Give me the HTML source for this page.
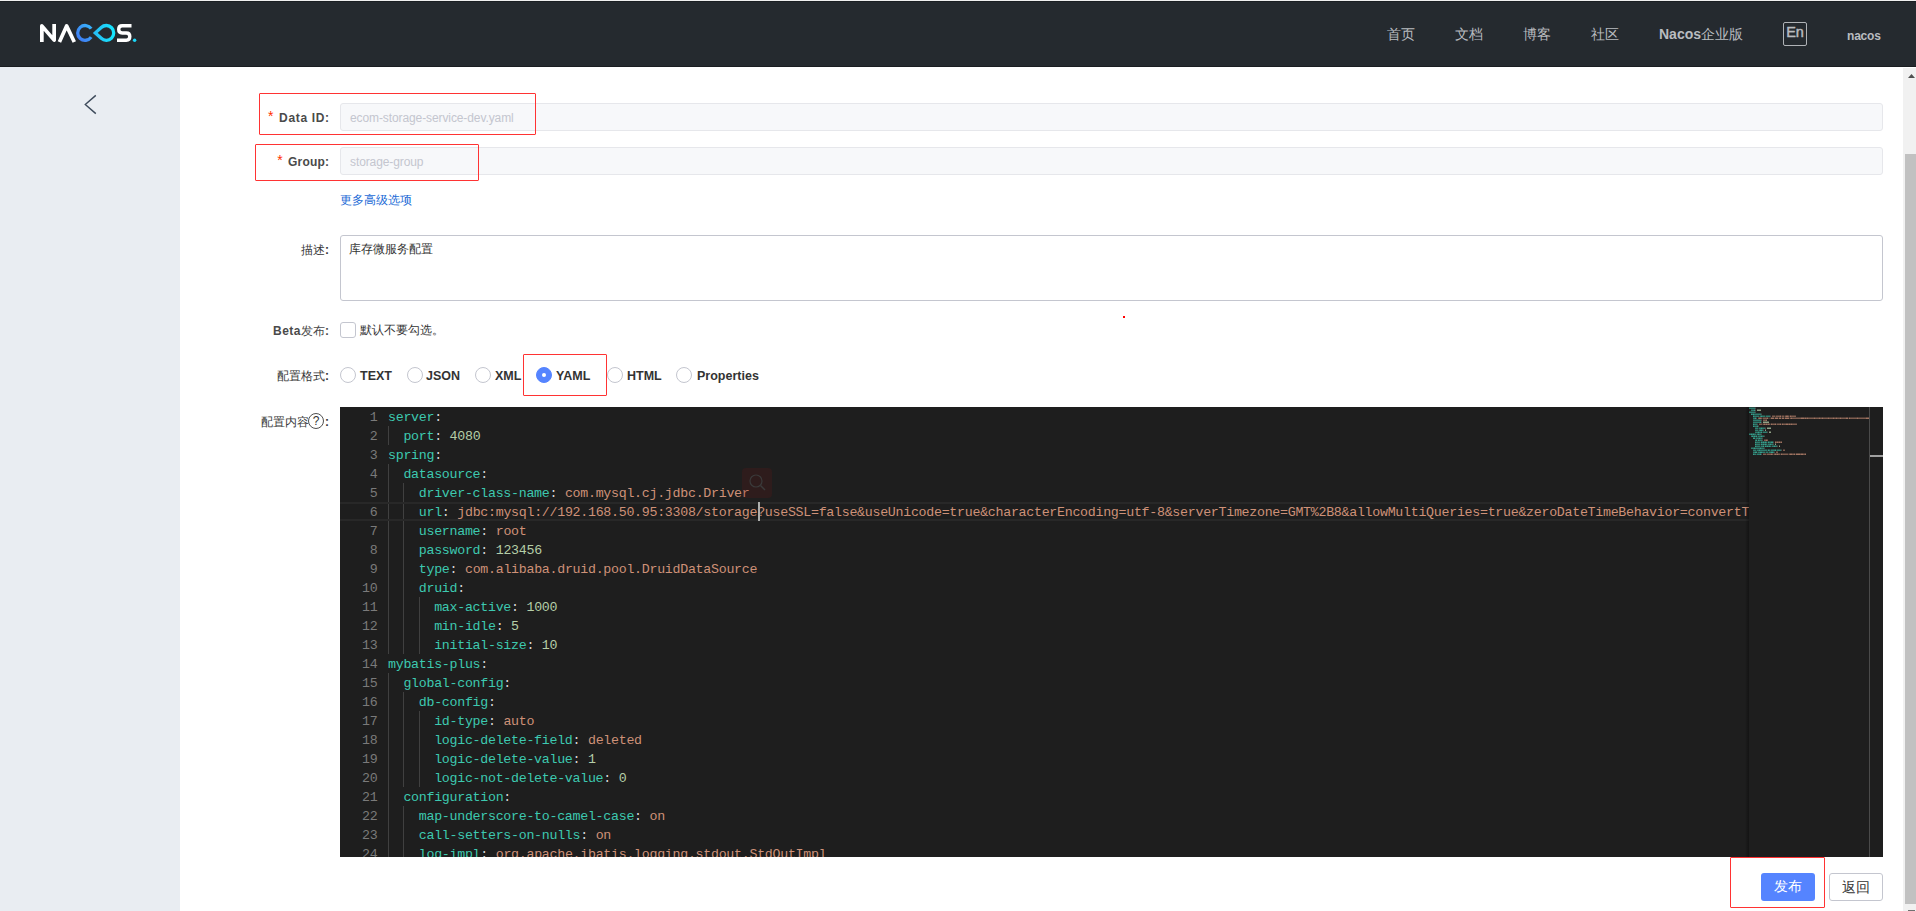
<!DOCTYPE html>
<html><head><meta charset="utf-8">
<style>
*{box-sizing:border-box}
html,body{margin:0;padding:0;width:1916px;height:911px;overflow:hidden;background:#fff;font-family:"Liberation Sans",sans-serif;}
.abs{position:absolute}
#topline{position:absolute;left:0;top:0;width:1916px;height:1px;background:#f0f0f0}
#hdr{position:absolute;left:0;top:1px;width:1916px;height:66px;background:#252a2f;border-top:1px solid #1b1f23;border-bottom:1px solid #1a1d21}
.nav{position:absolute;top:26px;font-size:14px;line-height:16px;color:#b9bcc0;white-space:nowrap;font-weight:500}
#side{position:absolute;left:0;top:67px;width:180px;height:844px;background:#e9edf2}
.lbl{position:absolute;right:1587px;font-size:12px;line-height:14px;color:#4a4a4a;font-weight:bold;white-space:nowrap;text-align:right}
.req{color:#ff3000;font-weight:normal;font-size:14px;margin-right:5px;line-height:0;position:relative;top:-1px}
.inp{position:absolute;left:340px;width:1543px;height:28px;background:#f7f8fa;border:1px solid #e6e7eb;border-radius:3px;font-size:12px;color:#c4c6cf;padding:7px 9px;line-height:14px;letter-spacing:-0.1px}
.redbox{position:absolute;border:1px solid #ff3333;border-radius:1px}
.radio{position:absolute;top:367px;width:16px;height:16px;border:1px solid #c4c6cf;border-radius:50%;background:#fff}
.rlab{position:absolute;top:369px;font-size:12.5px;line-height:14px;font-weight:bold;color:#333}
#editor{position:absolute;left:340px;top:407px;width:1543px;height:450px;background:#1e1e1e;overflow:hidden}
.ln{position:absolute;left:48px;height:19px;line-height:21px;font-family:"Liberation Mono",monospace;font-size:13.3px;letter-spacing:-0.29px;color:#d4d4d4;white-space:pre}
.lnum{position:absolute;left:0;width:37.5px;text-align:right;height:19px;line-height:21px;font-family:"Liberation Mono",monospace;font-size:13.3px;letter-spacing:-0.29px;color:#7a7a7a}
.guide{position:absolute;width:1px;height:19px;background:#404040}
.btn{position:absolute;top:873px;height:28px;width:54px;border-radius:3px;font-size:14px;line-height:27px;text-align:center}
</style></head><body>
<div id="topline"></div>
<div id="hdr"></div>
<svg class="abs" style="left:38px;top:22px" width="100" height="22" viewBox="0 0 100 22">
  <defs>
    <linearGradient id="gb" x1="0" y1="1" x2="1" y2="0"><stop offset="0" stop-color="#3f78f2"/><stop offset="1" stop-color="#38b4fc"/></linearGradient>
    <linearGradient id="gc" x1="0" y1="0" x2="1" y2="0"><stop offset="0" stop-color="#26bdf5"/><stop offset="1" stop-color="#16e6fe"/></linearGradient>
  </defs>
  <path d="M3.85 20V3.85L16.15 18.15V2" fill="none" stroke="#fff" stroke-width="3.7" stroke-linejoin="round"/>
  <path d="M21.4 20L28.6 3.9L36.3 20" fill="none" stroke="#fff" stroke-width="3.7" stroke-linejoin="round"/>
  <path d="M53.16 6.66A7.4 7.4 0 1 0 53.16 15.14" fill="none" stroke="url(#gb)" stroke-width="3.3"/>
  <path d="M57.3 10.9L63.25 5.49A7.4 7.4 0 1 1 63.25 16.31Z" fill="none" stroke="url(#gc)" stroke-width="3.3" stroke-linejoin="miter"/>
  <path d="M93.5 3.75H84.2Q80.7 3.75 80.7 7.3Q80.7 10.95 84.2 10.95H88.3Q91.8 10.95 91.8 14.6Q91.8 18.25 88.3 18.25H79" fill="none" stroke="#fff" stroke-width="3.4"/>
  <circle cx="96.6" cy="18.3" r="1.75" fill="#1bd6f8"/>
</svg>
<div class="nav" style="left:1387px">首页</div>
<div class="nav" style="left:1455px">文档</div>
<div class="nav" style="left:1523px">博客</div>
<div class="nav" style="left:1591px">社区</div>
<div class="nav" style="left:1659px"><b>Nacos</b>企业版</div>
<div class="abs" style="left:1783px;top:22px;width:24px;height:24px;border:1px solid #b0b3b7;border-radius:2px;color:#b9bcc0;font-size:14.5px;line-height:18px;text-align:center;font-weight:normal;-webkit-text-stroke:0.45px #b9bcc0">En</div>
<div class="nav" style="left:1847px;top:27.6px;font-size:12px;font-weight:bold;letter-spacing:-0.2px">nacos</div>

<div id="side"></div>
<svg class="abs" style="left:80px;top:92px" width="20" height="26"><path d="M15.8 3.4 L5.3 12.5 L15.8 21.6" fill="none" stroke="#3d4a5b" stroke-width="1.4"/></svg>

<div class="lbl" style="top:111px;letter-spacing:0.65px;margin-right:-0.65px"><span class="req">*</span>Data ID:</div>
<div class="inp" style="top:103px">ecom-storage-service-dev.yaml</div>
<div class="lbl" style="top:155px;letter-spacing:0.2px;margin-right:-0.2px"><span class="req">*</span>Group:</div>
<div class="inp" style="top:147px">storage-group</div>
<div class="abs" style="left:340px;top:193px;font-size:12px;line-height:14px;color:#1a6ad6;font-weight:500">更多高级选项</div>

<div class="lbl" style="top:243px;font-weight:500;color:#383838">描述<b>:</b></div>
<div class="abs" style="left:340px;top:235px;width:1543px;height:66px;border:1px solid #c4c6cf;border-radius:3px;font-size:12px;color:#333;padding:5px 8px;line-height:16px">库存微服务配置</div>
<div class="abs" style="left:1123px;top:316px;width:2px;height:2px;background:#ff0000"></div>

<div class="lbl" style="top:324px"><span style="letter-spacing:0.5px">Beta</span><span style="font-weight:500">发布</span>:</div>
<div class="abs" style="left:340px;top:322px;width:16px;height:16px;border:1px solid #c4c6cf;border-radius:3px;background:#fff"></div>
<div class="abs" style="left:360px;top:323px;font-size:12px;line-height:14px;color:#333;font-weight:500">默认不要勾选。</div>

<div class="lbl" style="top:369px;font-weight:500;color:#383838">配置格式<b>:</b></div>
<div class="radio" style="left:340px"></div><div class="rlab" style="left:360px">TEXT</div>
<div class="radio" style="left:407px"></div><div class="rlab" style="left:426px">JSON</div>
<div class="radio" style="left:475px"></div><div class="rlab" style="left:495px">XML</div>
<div class="radio" style="left:536px;background:#5584ff;border-color:#5584ff"><div style="position:absolute;left:5px;top:5px;width:4px;height:4px;border-radius:50%;background:#fff"></div></div><div class="rlab" style="left:556px">YAML</div>
<div class="radio" style="left:607px"></div><div class="rlab" style="left:627px">HTML</div>
<div class="radio" style="left:676px"></div><div class="rlab" style="left:697px">Properties</div>

<div class="lbl" style="top:415px;font-weight:500;color:#383838">配置内容<span style="display:inline-block;width:16px"></span><b>:</b></div>
<div class="abs" style="left:308px;top:413px;width:16px;height:16px;border:1.4px solid #505050;border-radius:50%;font-size:12px;line-height:14.5px;text-align:center;color:#333;font-family:'Liberation Sans',sans-serif">?</div>

<div id="editor">
<div class="guide" style="top:19px;left:48.00px"></div>
<div class="guide" style="top:57px;left:48.00px"></div>
<div class="guide" style="top:76px;left:48.00px"></div>
<div class="guide" style="top:76px;left:63.38px"></div>
<div class="guide" style="top:95px;left:48.00px"></div>
<div class="guide" style="top:95px;left:63.38px"></div>
<div class="guide" style="top:114px;left:48.00px"></div>
<div class="guide" style="top:114px;left:63.38px"></div>
<div class="guide" style="top:133px;left:48.00px"></div>
<div class="guide" style="top:133px;left:63.38px"></div>
<div class="guide" style="top:152px;left:48.00px"></div>
<div class="guide" style="top:152px;left:63.38px"></div>
<div class="guide" style="top:171px;left:48.00px"></div>
<div class="guide" style="top:171px;left:63.38px"></div>
<div class="guide" style="top:190px;left:48.00px"></div>
<div class="guide" style="top:190px;left:63.38px"></div>
<div class="guide" style="top:190px;left:78.76px"></div>
<div class="guide" style="top:209px;left:48.00px"></div>
<div class="guide" style="top:209px;left:63.38px"></div>
<div class="guide" style="top:209px;left:78.76px"></div>
<div class="guide" style="top:228px;left:48.00px"></div>
<div class="guide" style="top:228px;left:63.38px"></div>
<div class="guide" style="top:228px;left:78.76px"></div>
<div class="guide" style="top:266px;left:48.00px"></div>
<div class="guide" style="top:285px;left:48.00px"></div>
<div class="guide" style="top:285px;left:63.38px"></div>
<div class="guide" style="top:304px;left:48.00px"></div>
<div class="guide" style="top:304px;left:63.38px"></div>
<div class="guide" style="top:304px;left:78.76px"></div>
<div class="guide" style="top:323px;left:48.00px"></div>
<div class="guide" style="top:323px;left:63.38px"></div>
<div class="guide" style="top:323px;left:78.76px"></div>
<div class="guide" style="top:342px;left:48.00px"></div>
<div class="guide" style="top:342px;left:63.38px"></div>
<div class="guide" style="top:342px;left:78.76px"></div>
<div class="guide" style="top:361px;left:48.00px"></div>
<div class="guide" style="top:361px;left:63.38px"></div>
<div class="guide" style="top:361px;left:78.76px"></div>
<div class="guide" style="top:380px;left:48.00px"></div>
<div class="guide" style="top:399px;left:48.00px"></div>
<div class="guide" style="top:399px;left:63.38px"></div>
<div class="guide" style="top:418px;left:48.00px"></div>
<div class="guide" style="top:418px;left:63.38px"></div>
<div class="guide" style="top:437px;left:48.00px"></div>
<div class="guide" style="top:437px;left:63.38px"></div>
<div class="ln" style="top:0px"><span style="color:#3dc9b0">server</span><span style="color:#d4d4d4">:</span></div>
<div class="lnum" style="top:0px">1</div>
<div class="ln" style="top:19px">  <span style="color:#3dc9b0">port</span><span style="color:#d4d4d4">:</span> <span style="color:#b5cea8">4080</span></div>
<div class="lnum" style="top:19px">2</div>
<div class="ln" style="top:38px"><span style="color:#3dc9b0">spring</span><span style="color:#d4d4d4">:</span></div>
<div class="lnum" style="top:38px">3</div>
<div class="ln" style="top:57px">  <span style="color:#3dc9b0">datasource</span><span style="color:#d4d4d4">:</span></div>
<div class="lnum" style="top:57px">4</div>
<div class="ln" style="top:76px">    <span style="color:#3dc9b0">driver-class-name</span><span style="color:#d4d4d4">:</span> <span style="color:#ce9178">com.mysql.cj.jdbc.Driver</span></div>
<div class="lnum" style="top:76px">5</div>
<div class="ln" style="top:95px">    <span style="color:#3dc9b0">url</span><span style="color:#d4d4d4">:</span> <span style="color:#ce9178">jdbc:mysql://192.168.50.95:3308/storage?useSSL=false&amp;useUnicode=true&amp;characterEncoding=utf-8&amp;serverTimezone=GMT%2B8&amp;allowMultiQueries=true&amp;zeroDateTimeBehavior=convertToNull</span></div>
<div class="lnum" style="top:95px">6</div>
<div class="ln" style="top:114px">    <span style="color:#3dc9b0">username</span><span style="color:#d4d4d4">:</span> <span style="color:#ce9178">root</span></div>
<div class="lnum" style="top:114px">7</div>
<div class="ln" style="top:133px">    <span style="color:#3dc9b0">password</span><span style="color:#d4d4d4">:</span> <span style="color:#b5cea8">123456</span></div>
<div class="lnum" style="top:133px">8</div>
<div class="ln" style="top:152px">    <span style="color:#3dc9b0">type</span><span style="color:#d4d4d4">:</span> <span style="color:#ce9178">com.alibaba.druid.pool.DruidDataSource</span></div>
<div class="lnum" style="top:152px">9</div>
<div class="ln" style="top:171px">    <span style="color:#3dc9b0">druid</span><span style="color:#d4d4d4">:</span></div>
<div class="lnum" style="top:171px">10</div>
<div class="ln" style="top:190px">      <span style="color:#3dc9b0">max-active</span><span style="color:#d4d4d4">:</span> <span style="color:#b5cea8">1000</span></div>
<div class="lnum" style="top:190px">11</div>
<div class="ln" style="top:209px">      <span style="color:#3dc9b0">min-idle</span><span style="color:#d4d4d4">:</span> <span style="color:#b5cea8">5</span></div>
<div class="lnum" style="top:209px">12</div>
<div class="ln" style="top:228px">      <span style="color:#3dc9b0">initial-size</span><span style="color:#d4d4d4">:</span> <span style="color:#b5cea8">10</span></div>
<div class="lnum" style="top:228px">13</div>
<div class="ln" style="top:247px"><span style="color:#3dc9b0">mybatis-plus</span><span style="color:#d4d4d4">:</span></div>
<div class="lnum" style="top:247px">14</div>
<div class="ln" style="top:266px">  <span style="color:#3dc9b0">global-config</span><span style="color:#d4d4d4">:</span></div>
<div class="lnum" style="top:266px">15</div>
<div class="ln" style="top:285px">    <span style="color:#3dc9b0">db-config</span><span style="color:#d4d4d4">:</span></div>
<div class="lnum" style="top:285px">16</div>
<div class="ln" style="top:304px">      <span style="color:#3dc9b0">id-type</span><span style="color:#d4d4d4">:</span> <span style="color:#ce9178">auto</span></div>
<div class="lnum" style="top:304px">17</div>
<div class="ln" style="top:323px">      <span style="color:#3dc9b0">logic-delete-field</span><span style="color:#d4d4d4">:</span> <span style="color:#ce9178">deleted</span></div>
<div class="lnum" style="top:323px">18</div>
<div class="ln" style="top:342px">      <span style="color:#3dc9b0">logic-delete-value</span><span style="color:#d4d4d4">:</span> <span style="color:#b5cea8">1</span></div>
<div class="lnum" style="top:342px">19</div>
<div class="ln" style="top:361px">      <span style="color:#3dc9b0">logic-not-delete-value</span><span style="color:#d4d4d4">:</span> <span style="color:#b5cea8">0</span></div>
<div class="lnum" style="top:361px">20</div>
<div class="ln" style="top:380px">  <span style="color:#3dc9b0">configuration</span><span style="color:#d4d4d4">:</span></div>
<div class="lnum" style="top:380px">21</div>
<div class="ln" style="top:399px">    <span style="color:#3dc9b0">map-underscore-to-camel-case</span><span style="color:#d4d4d4">:</span> <span style="color:#ce9178">on</span></div>
<div class="lnum" style="top:399px">22</div>
<div class="ln" style="top:418px">    <span style="color:#3dc9b0">call-setters-on-nulls</span><span style="color:#d4d4d4">:</span> <span style="color:#ce9178">on</span></div>
<div class="lnum" style="top:418px">23</div>
<div class="ln" style="top:437px">    <span style="color:#3dc9b0">log-impl</span><span style="color:#d4d4d4">:</span> <span style="color:#ce9178">org.apache.ibatis.logging.stdout.StdOutImpl</span></div>
<div class="lnum" style="top:437px">24</div>
<div class="abs" style="left:0;top:95px;width:1409px;height:19px;border-top:2px solid #282828;border-bottom:2px solid #282828"></div>
<div class="abs" style="left:418px;top:95px;width:2px;height:19px;background:#aeafad"></div>
<div class="abs" style="left:402px;top:61px;width:30px;height:30px;background:rgba(110,20,20,0.2);border-radius:4px"></div>
<svg class="abs" style="left:402px;top:61px" width="30" height="30"><circle cx="14" cy="13" r="6" fill="none" stroke="#3a3a3a" stroke-width="1.2"/><path d="M18.5 17.5 L23 22" stroke="#3a3a3a" stroke-width="1.5"/></svg>
<div class="abs" style="left:1405px;top:0;width:4px;height:450px;background:linear-gradient(to right,rgba(0,0,0,0),rgba(0,0,0,0.35))"></div>
<div class="abs" style="left:1409px;top:0;width:120px;height:450px;background:#1e1e1e"></div>
<svg class="abs" style="left:1409px;top:0" width="120" height="60"><rect x="0" y="0" width="1" height="1" fill="#3dc9b0" fill-opacity="0.28"/><rect x="0" y="1" width="1" height="1" fill="#3dc9b0" fill-opacity="0.55"/><rect x="1" y="0" width="1" height="1" fill="#3dc9b0" fill-opacity="0.28"/><rect x="1" y="1" width="1" height="1" fill="#3dc9b0" fill-opacity="0.55"/><rect x="2" y="0" width="1" height="1" fill="#3dc9b0" fill-opacity="0.28"/><rect x="2" y="1" width="1" height="1" fill="#3dc9b0" fill-opacity="0.55"/><rect x="3" y="0" width="1" height="1" fill="#3dc9b0" fill-opacity="0.28"/><rect x="3" y="1" width="1" height="1" fill="#3dc9b0" fill-opacity="0.55"/><rect x="4" y="0" width="1" height="1" fill="#3dc9b0" fill-opacity="0.28"/><rect x="4" y="1" width="1" height="1" fill="#3dc9b0" fill-opacity="0.55"/><rect x="5" y="0" width="1" height="1" fill="#3dc9b0" fill-opacity="0.28"/><rect x="5" y="1" width="1" height="1" fill="#3dc9b0" fill-opacity="0.55"/><rect x="6" y="0" width="1" height="1" fill="#d4d4d4" fill-opacity="0.12"/><rect x="6" y="1" width="1" height="1" fill="#d4d4d4" fill-opacity="0.25"/><rect x="2" y="2" width="1" height="1" fill="#3dc9b0" fill-opacity="0.28"/><rect x="2" y="3" width="1" height="1" fill="#3dc9b0" fill-opacity="0.55"/><rect x="3" y="2" width="1" height="1" fill="#3dc9b0" fill-opacity="0.28"/><rect x="3" y="3" width="1" height="1" fill="#3dc9b0" fill-opacity="0.55"/><rect x="4" y="2" width="1" height="1" fill="#3dc9b0" fill-opacity="0.28"/><rect x="4" y="3" width="1" height="1" fill="#3dc9b0" fill-opacity="0.55"/><rect x="5" y="2" width="1" height="1" fill="#3dc9b0" fill-opacity="0.38"/><rect x="5" y="3" width="1" height="1" fill="#3dc9b0" fill-opacity="0.75"/><rect x="6" y="2" width="1" height="1" fill="#d4d4d4" fill-opacity="0.12"/><rect x="6" y="3" width="1" height="1" fill="#d4d4d4" fill-opacity="0.25"/><rect x="8" y="2" width="1" height="1" fill="#b5cea8" fill-opacity="0.38"/><rect x="8" y="3" width="1" height="1" fill="#b5cea8" fill-opacity="0.75"/><rect x="9" y="2" width="1" height="1" fill="#b5cea8" fill-opacity="0.38"/><rect x="9" y="3" width="1" height="1" fill="#b5cea8" fill-opacity="0.75"/><rect x="10" y="2" width="1" height="1" fill="#b5cea8" fill-opacity="0.38"/><rect x="10" y="3" width="1" height="1" fill="#b5cea8" fill-opacity="0.75"/><rect x="11" y="2" width="1" height="1" fill="#b5cea8" fill-opacity="0.38"/><rect x="11" y="3" width="1" height="1" fill="#b5cea8" fill-opacity="0.75"/><rect x="0" y="4" width="1" height="1" fill="#3dc9b0" fill-opacity="0.28"/><rect x="0" y="5" width="1" height="1" fill="#3dc9b0" fill-opacity="0.55"/><rect x="1" y="4" width="1" height="1" fill="#3dc9b0" fill-opacity="0.28"/><rect x="1" y="5" width="1" height="1" fill="#3dc9b0" fill-opacity="0.55"/><rect x="2" y="4" width="1" height="1" fill="#3dc9b0" fill-opacity="0.28"/><rect x="2" y="5" width="1" height="1" fill="#3dc9b0" fill-opacity="0.55"/><rect x="3" y="4" width="1" height="1" fill="#3dc9b0" fill-opacity="0.28"/><rect x="3" y="5" width="1" height="1" fill="#3dc9b0" fill-opacity="0.55"/><rect x="4" y="4" width="1" height="1" fill="#3dc9b0" fill-opacity="0.28"/><rect x="4" y="5" width="1" height="1" fill="#3dc9b0" fill-opacity="0.55"/><rect x="5" y="4" width="1" height="1" fill="#3dc9b0" fill-opacity="0.28"/><rect x="5" y="5" width="1" height="1" fill="#3dc9b0" fill-opacity="0.55"/><rect x="6" y="4" width="1" height="1" fill="#d4d4d4" fill-opacity="0.12"/><rect x="6" y="5" width="1" height="1" fill="#d4d4d4" fill-opacity="0.25"/><rect x="2" y="6" width="1" height="1" fill="#3dc9b0" fill-opacity="0.38"/><rect x="2" y="7" width="1" height="1" fill="#3dc9b0" fill-opacity="0.75"/><rect x="3" y="6" width="1" height="1" fill="#3dc9b0" fill-opacity="0.28"/><rect x="3" y="7" width="1" height="1" fill="#3dc9b0" fill-opacity="0.55"/><rect x="4" y="6" width="1" height="1" fill="#3dc9b0" fill-opacity="0.38"/><rect x="4" y="7" width="1" height="1" fill="#3dc9b0" fill-opacity="0.75"/><rect x="5" y="6" width="1" height="1" fill="#3dc9b0" fill-opacity="0.28"/><rect x="5" y="7" width="1" height="1" fill="#3dc9b0" fill-opacity="0.55"/><rect x="6" y="6" width="1" height="1" fill="#3dc9b0" fill-opacity="0.28"/><rect x="6" y="7" width="1" height="1" fill="#3dc9b0" fill-opacity="0.55"/><rect x="7" y="6" width="1" height="1" fill="#3dc9b0" fill-opacity="0.28"/><rect x="7" y="7" width="1" height="1" fill="#3dc9b0" fill-opacity="0.55"/><rect x="8" y="6" width="1" height="1" fill="#3dc9b0" fill-opacity="0.28"/><rect x="8" y="7" width="1" height="1" fill="#3dc9b0" fill-opacity="0.55"/><rect x="9" y="6" width="1" height="1" fill="#3dc9b0" fill-opacity="0.28"/><rect x="9" y="7" width="1" height="1" fill="#3dc9b0" fill-opacity="0.55"/><rect x="10" y="6" width="1" height="1" fill="#3dc9b0" fill-opacity="0.28"/><rect x="10" y="7" width="1" height="1" fill="#3dc9b0" fill-opacity="0.55"/><rect x="11" y="6" width="1" height="1" fill="#3dc9b0" fill-opacity="0.28"/><rect x="11" y="7" width="1" height="1" fill="#3dc9b0" fill-opacity="0.55"/><rect x="12" y="6" width="1" height="1" fill="#d4d4d4" fill-opacity="0.12"/><rect x="12" y="7" width="1" height="1" fill="#d4d4d4" fill-opacity="0.25"/><rect x="4" y="8" width="1" height="1" fill="#3dc9b0" fill-opacity="0.38"/><rect x="4" y="9" width="1" height="1" fill="#3dc9b0" fill-opacity="0.75"/><rect x="5" y="8" width="1" height="1" fill="#3dc9b0" fill-opacity="0.28"/><rect x="5" y="9" width="1" height="1" fill="#3dc9b0" fill-opacity="0.55"/><rect x="6" y="8" width="1" height="1" fill="#3dc9b0" fill-opacity="0.28"/><rect x="6" y="9" width="1" height="1" fill="#3dc9b0" fill-opacity="0.55"/><rect x="7" y="8" width="1" height="1" fill="#3dc9b0" fill-opacity="0.28"/><rect x="7" y="9" width="1" height="1" fill="#3dc9b0" fill-opacity="0.55"/><rect x="8" y="8" width="1" height="1" fill="#3dc9b0" fill-opacity="0.28"/><rect x="8" y="9" width="1" height="1" fill="#3dc9b0" fill-opacity="0.55"/><rect x="9" y="8" width="1" height="1" fill="#3dc9b0" fill-opacity="0.28"/><rect x="9" y="9" width="1" height="1" fill="#3dc9b0" fill-opacity="0.55"/><rect x="10" y="8" width="1" height="1" fill="#3dc9b0" fill-opacity="0.12"/><rect x="10" y="9" width="1" height="1" fill="#3dc9b0" fill-opacity="0.25"/><rect x="11" y="8" width="1" height="1" fill="#3dc9b0" fill-opacity="0.28"/><rect x="11" y="9" width="1" height="1" fill="#3dc9b0" fill-opacity="0.55"/><rect x="12" y="8" width="1" height="1" fill="#3dc9b0" fill-opacity="0.38"/><rect x="12" y="9" width="1" height="1" fill="#3dc9b0" fill-opacity="0.75"/><rect x="13" y="8" width="1" height="1" fill="#3dc9b0" fill-opacity="0.28"/><rect x="13" y="9" width="1" height="1" fill="#3dc9b0" fill-opacity="0.55"/><rect x="14" y="8" width="1" height="1" fill="#3dc9b0" fill-opacity="0.28"/><rect x="14" y="9" width="1" height="1" fill="#3dc9b0" fill-opacity="0.55"/><rect x="15" y="8" width="1" height="1" fill="#3dc9b0" fill-opacity="0.28"/><rect x="15" y="9" width="1" height="1" fill="#3dc9b0" fill-opacity="0.55"/><rect x="16" y="8" width="1" height="1" fill="#3dc9b0" fill-opacity="0.12"/><rect x="16" y="9" width="1" height="1" fill="#3dc9b0" fill-opacity="0.25"/><rect x="17" y="8" width="1" height="1" fill="#3dc9b0" fill-opacity="0.28"/><rect x="17" y="9" width="1" height="1" fill="#3dc9b0" fill-opacity="0.55"/><rect x="18" y="8" width="1" height="1" fill="#3dc9b0" fill-opacity="0.28"/><rect x="18" y="9" width="1" height="1" fill="#3dc9b0" fill-opacity="0.55"/><rect x="19" y="8" width="1" height="1" fill="#3dc9b0" fill-opacity="0.28"/><rect x="19" y="9" width="1" height="1" fill="#3dc9b0" fill-opacity="0.55"/><rect x="20" y="8" width="1" height="1" fill="#3dc9b0" fill-opacity="0.28"/><rect x="20" y="9" width="1" height="1" fill="#3dc9b0" fill-opacity="0.55"/><rect x="21" y="8" width="1" height="1" fill="#d4d4d4" fill-opacity="0.12"/><rect x="21" y="9" width="1" height="1" fill="#d4d4d4" fill-opacity="0.25"/><rect x="23" y="8" width="1" height="1" fill="#ce9178" fill-opacity="0.28"/><rect x="23" y="9" width="1" height="1" fill="#ce9178" fill-opacity="0.55"/><rect x="24" y="8" width="1" height="1" fill="#ce9178" fill-opacity="0.28"/><rect x="24" y="9" width="1" height="1" fill="#ce9178" fill-opacity="0.55"/><rect x="25" y="8" width="1" height="1" fill="#ce9178" fill-opacity="0.28"/><rect x="25" y="9" width="1" height="1" fill="#ce9178" fill-opacity="0.55"/><rect x="26" y="8" width="1" height="1" fill="#ce9178" fill-opacity="0.12"/><rect x="26" y="9" width="1" height="1" fill="#ce9178" fill-opacity="0.25"/><rect x="27" y="8" width="1" height="1" fill="#ce9178" fill-opacity="0.28"/><rect x="27" y="9" width="1" height="1" fill="#ce9178" fill-opacity="0.55"/><rect x="28" y="8" width="1" height="1" fill="#ce9178" fill-opacity="0.28"/><rect x="28" y="9" width="1" height="1" fill="#ce9178" fill-opacity="0.55"/><rect x="29" y="8" width="1" height="1" fill="#ce9178" fill-opacity="0.28"/><rect x="29" y="9" width="1" height="1" fill="#ce9178" fill-opacity="0.55"/><rect x="30" y="8" width="1" height="1" fill="#ce9178" fill-opacity="0.28"/><rect x="30" y="9" width="1" height="1" fill="#ce9178" fill-opacity="0.55"/><rect x="31" y="8" width="1" height="1" fill="#ce9178" fill-opacity="0.38"/><rect x="31" y="9" width="1" height="1" fill="#ce9178" fill-opacity="0.75"/><rect x="32" y="8" width="1" height="1" fill="#ce9178" fill-opacity="0.12"/><rect x="32" y="9" width="1" height="1" fill="#ce9178" fill-opacity="0.25"/><rect x="33" y="8" width="1" height="1" fill="#ce9178" fill-opacity="0.28"/><rect x="33" y="9" width="1" height="1" fill="#ce9178" fill-opacity="0.55"/><rect x="34" y="8" width="1" height="1" fill="#ce9178" fill-opacity="0.28"/><rect x="34" y="9" width="1" height="1" fill="#ce9178" fill-opacity="0.55"/><rect x="35" y="8" width="1" height="1" fill="#ce9178" fill-opacity="0.12"/><rect x="35" y="9" width="1" height="1" fill="#ce9178" fill-opacity="0.25"/><rect x="36" y="8" width="1" height="1" fill="#ce9178" fill-opacity="0.28"/><rect x="36" y="9" width="1" height="1" fill="#ce9178" fill-opacity="0.55"/><rect x="37" y="8" width="1" height="1" fill="#ce9178" fill-opacity="0.38"/><rect x="37" y="9" width="1" height="1" fill="#ce9178" fill-opacity="0.75"/><rect x="38" y="8" width="1" height="1" fill="#ce9178" fill-opacity="0.38"/><rect x="38" y="9" width="1" height="1" fill="#ce9178" fill-opacity="0.75"/><rect x="39" y="8" width="1" height="1" fill="#ce9178" fill-opacity="0.28"/><rect x="39" y="9" width="1" height="1" fill="#ce9178" fill-opacity="0.55"/><rect x="40" y="8" width="1" height="1" fill="#ce9178" fill-opacity="0.12"/><rect x="40" y="9" width="1" height="1" fill="#ce9178" fill-opacity="0.25"/><rect x="41" y="8" width="1" height="1" fill="#ce9178" fill-opacity="0.38"/><rect x="41" y="9" width="1" height="1" fill="#ce9178" fill-opacity="0.75"/><rect x="42" y="8" width="1" height="1" fill="#ce9178" fill-opacity="0.28"/><rect x="42" y="9" width="1" height="1" fill="#ce9178" fill-opacity="0.55"/><rect x="43" y="8" width="1" height="1" fill="#ce9178" fill-opacity="0.28"/><rect x="43" y="9" width="1" height="1" fill="#ce9178" fill-opacity="0.55"/><rect x="44" y="8" width="1" height="1" fill="#ce9178" fill-opacity="0.28"/><rect x="44" y="9" width="1" height="1" fill="#ce9178" fill-opacity="0.55"/><rect x="45" y="8" width="1" height="1" fill="#ce9178" fill-opacity="0.28"/><rect x="45" y="9" width="1" height="1" fill="#ce9178" fill-opacity="0.55"/><rect x="46" y="8" width="1" height="1" fill="#ce9178" fill-opacity="0.28"/><rect x="46" y="9" width="1" height="1" fill="#ce9178" fill-opacity="0.55"/><rect x="4" y="10" width="1" height="1" fill="#3dc9b0" fill-opacity="0.28"/><rect x="4" y="11" width="1" height="1" fill="#3dc9b0" fill-opacity="0.55"/><rect x="5" y="10" width="1" height="1" fill="#3dc9b0" fill-opacity="0.28"/><rect x="5" y="11" width="1" height="1" fill="#3dc9b0" fill-opacity="0.55"/><rect x="6" y="10" width="1" height="1" fill="#3dc9b0" fill-opacity="0.38"/><rect x="6" y="11" width="1" height="1" fill="#3dc9b0" fill-opacity="0.75"/><rect x="7" y="10" width="1" height="1" fill="#d4d4d4" fill-opacity="0.12"/><rect x="7" y="11" width="1" height="1" fill="#d4d4d4" fill-opacity="0.25"/><rect x="9" y="10" width="1" height="1" fill="#ce9178" fill-opacity="0.28"/><rect x="9" y="11" width="1" height="1" fill="#ce9178" fill-opacity="0.55"/><rect x="10" y="10" width="1" height="1" fill="#ce9178" fill-opacity="0.38"/><rect x="10" y="11" width="1" height="1" fill="#ce9178" fill-opacity="0.75"/><rect x="11" y="10" width="1" height="1" fill="#ce9178" fill-opacity="0.38"/><rect x="11" y="11" width="1" height="1" fill="#ce9178" fill-opacity="0.75"/><rect x="12" y="10" width="1" height="1" fill="#ce9178" fill-opacity="0.28"/><rect x="12" y="11" width="1" height="1" fill="#ce9178" fill-opacity="0.55"/><rect x="13" y="10" width="1" height="1" fill="#ce9178" fill-opacity="0.12"/><rect x="13" y="11" width="1" height="1" fill="#ce9178" fill-opacity="0.25"/><rect x="14" y="10" width="1" height="1" fill="#ce9178" fill-opacity="0.28"/><rect x="14" y="11" width="1" height="1" fill="#ce9178" fill-opacity="0.55"/><rect x="15" y="10" width="1" height="1" fill="#ce9178" fill-opacity="0.28"/><rect x="15" y="11" width="1" height="1" fill="#ce9178" fill-opacity="0.55"/><rect x="16" y="10" width="1" height="1" fill="#ce9178" fill-opacity="0.28"/><rect x="16" y="11" width="1" height="1" fill="#ce9178" fill-opacity="0.55"/><rect x="17" y="10" width="1" height="1" fill="#ce9178" fill-opacity="0.28"/><rect x="17" y="11" width="1" height="1" fill="#ce9178" fill-opacity="0.55"/><rect x="18" y="10" width="1" height="1" fill="#ce9178" fill-opacity="0.38"/><rect x="18" y="11" width="1" height="1" fill="#ce9178" fill-opacity="0.75"/><rect x="19" y="10" width="1" height="1" fill="#ce9178" fill-opacity="0.12"/><rect x="19" y="11" width="1" height="1" fill="#ce9178" fill-opacity="0.25"/><rect x="20" y="10" width="1" height="1" fill="#ce9178" fill-opacity="0.12"/><rect x="20" y="11" width="1" height="1" fill="#ce9178" fill-opacity="0.25"/><rect x="21" y="10" width="1" height="1" fill="#ce9178" fill-opacity="0.12"/><rect x="21" y="11" width="1" height="1" fill="#ce9178" fill-opacity="0.25"/><rect x="22" y="10" width="1" height="1" fill="#ce9178" fill-opacity="0.38"/><rect x="22" y="11" width="1" height="1" fill="#ce9178" fill-opacity="0.75"/><rect x="23" y="10" width="1" height="1" fill="#ce9178" fill-opacity="0.38"/><rect x="23" y="11" width="1" height="1" fill="#ce9178" fill-opacity="0.75"/><rect x="24" y="10" width="1" height="1" fill="#ce9178" fill-opacity="0.38"/><rect x="24" y="11" width="1" height="1" fill="#ce9178" fill-opacity="0.75"/><rect x="25" y="10" width="1" height="1" fill="#ce9178" fill-opacity="0.12"/><rect x="25" y="11" width="1" height="1" fill="#ce9178" fill-opacity="0.25"/><rect x="26" y="10" width="1" height="1" fill="#ce9178" fill-opacity="0.38"/><rect x="26" y="11" width="1" height="1" fill="#ce9178" fill-opacity="0.75"/><rect x="27" y="10" width="1" height="1" fill="#ce9178" fill-opacity="0.38"/><rect x="27" y="11" width="1" height="1" fill="#ce9178" fill-opacity="0.75"/><rect x="28" y="10" width="1" height="1" fill="#ce9178" fill-opacity="0.38"/><rect x="28" y="11" width="1" height="1" fill="#ce9178" fill-opacity="0.75"/><rect x="29" y="10" width="1" height="1" fill="#ce9178" fill-opacity="0.12"/><rect x="29" y="11" width="1" height="1" fill="#ce9178" fill-opacity="0.25"/><rect x="30" y="10" width="1" height="1" fill="#ce9178" fill-opacity="0.38"/><rect x="30" y="11" width="1" height="1" fill="#ce9178" fill-opacity="0.75"/><rect x="31" y="10" width="1" height="1" fill="#ce9178" fill-opacity="0.38"/><rect x="31" y="11" width="1" height="1" fill="#ce9178" fill-opacity="0.75"/><rect x="32" y="10" width="1" height="1" fill="#ce9178" fill-opacity="0.12"/><rect x="32" y="11" width="1" height="1" fill="#ce9178" fill-opacity="0.25"/><rect x="33" y="10" width="1" height="1" fill="#ce9178" fill-opacity="0.38"/><rect x="33" y="11" width="1" height="1" fill="#ce9178" fill-opacity="0.75"/><rect x="34" y="10" width="1" height="1" fill="#ce9178" fill-opacity="0.38"/><rect x="34" y="11" width="1" height="1" fill="#ce9178" fill-opacity="0.75"/><rect x="35" y="10" width="1" height="1" fill="#ce9178" fill-opacity="0.12"/><rect x="35" y="11" width="1" height="1" fill="#ce9178" fill-opacity="0.25"/><rect x="36" y="10" width="1" height="1" fill="#ce9178" fill-opacity="0.38"/><rect x="36" y="11" width="1" height="1" fill="#ce9178" fill-opacity="0.75"/><rect x="37" y="10" width="1" height="1" fill="#ce9178" fill-opacity="0.38"/><rect x="37" y="11" width="1" height="1" fill="#ce9178" fill-opacity="0.75"/><rect x="38" y="10" width="1" height="1" fill="#ce9178" fill-opacity="0.38"/><rect x="38" y="11" width="1" height="1" fill="#ce9178" fill-opacity="0.75"/><rect x="39" y="10" width="1" height="1" fill="#ce9178" fill-opacity="0.38"/><rect x="39" y="11" width="1" height="1" fill="#ce9178" fill-opacity="0.75"/><rect x="40" y="10" width="1" height="1" fill="#ce9178" fill-opacity="0.12"/><rect x="40" y="11" width="1" height="1" fill="#ce9178" fill-opacity="0.25"/><rect x="41" y="10" width="1" height="1" fill="#ce9178" fill-opacity="0.28"/><rect x="41" y="11" width="1" height="1" fill="#ce9178" fill-opacity="0.55"/><rect x="42" y="10" width="1" height="1" fill="#ce9178" fill-opacity="0.38"/><rect x="42" y="11" width="1" height="1" fill="#ce9178" fill-opacity="0.75"/><rect x="43" y="10" width="1" height="1" fill="#ce9178" fill-opacity="0.28"/><rect x="43" y="11" width="1" height="1" fill="#ce9178" fill-opacity="0.55"/><rect x="44" y="10" width="1" height="1" fill="#ce9178" fill-opacity="0.28"/><rect x="44" y="11" width="1" height="1" fill="#ce9178" fill-opacity="0.55"/><rect x="45" y="10" width="1" height="1" fill="#ce9178" fill-opacity="0.28"/><rect x="45" y="11" width="1" height="1" fill="#ce9178" fill-opacity="0.55"/><rect x="46" y="10" width="1" height="1" fill="#ce9178" fill-opacity="0.28"/><rect x="46" y="11" width="1" height="1" fill="#ce9178" fill-opacity="0.55"/><rect x="47" y="10" width="1" height="1" fill="#ce9178" fill-opacity="0.28"/><rect x="47" y="11" width="1" height="1" fill="#ce9178" fill-opacity="0.55"/><rect x="48" y="10" width="1" height="1" fill="#ce9178" fill-opacity="0.28"/><rect x="48" y="11" width="1" height="1" fill="#ce9178" fill-opacity="0.55"/><rect x="49" y="10" width="1" height="1" fill="#ce9178" fill-opacity="0.28"/><rect x="49" y="11" width="1" height="1" fill="#ce9178" fill-opacity="0.55"/><rect x="50" y="10" width="1" height="1" fill="#ce9178" fill-opacity="0.28"/><rect x="50" y="11" width="1" height="1" fill="#ce9178" fill-opacity="0.55"/><rect x="51" y="10" width="1" height="1" fill="#ce9178" fill-opacity="0.28"/><rect x="51" y="11" width="1" height="1" fill="#ce9178" fill-opacity="0.55"/><rect x="52" y="10" width="1" height="1" fill="#ce9178" fill-opacity="0.38"/><rect x="52" y="11" width="1" height="1" fill="#ce9178" fill-opacity="0.75"/><rect x="53" y="10" width="1" height="1" fill="#ce9178" fill-opacity="0.38"/><rect x="53" y="11" width="1" height="1" fill="#ce9178" fill-opacity="0.75"/><rect x="54" y="10" width="1" height="1" fill="#ce9178" fill-opacity="0.38"/><rect x="54" y="11" width="1" height="1" fill="#ce9178" fill-opacity="0.75"/><rect x="55" y="10" width="1" height="1" fill="#ce9178" fill-opacity="0.28"/><rect x="55" y="11" width="1" height="1" fill="#ce9178" fill-opacity="0.55"/><rect x="56" y="10" width="1" height="1" fill="#ce9178" fill-opacity="0.38"/><rect x="56" y="11" width="1" height="1" fill="#ce9178" fill-opacity="0.75"/><rect x="57" y="10" width="1" height="1" fill="#ce9178" fill-opacity="0.28"/><rect x="57" y="11" width="1" height="1" fill="#ce9178" fill-opacity="0.55"/><rect x="58" y="10" width="1" height="1" fill="#ce9178" fill-opacity="0.38"/><rect x="58" y="11" width="1" height="1" fill="#ce9178" fill-opacity="0.75"/><rect x="59" y="10" width="1" height="1" fill="#ce9178" fill-opacity="0.28"/><rect x="59" y="11" width="1" height="1" fill="#ce9178" fill-opacity="0.55"/><rect x="60" y="10" width="1" height="1" fill="#ce9178" fill-opacity="0.28"/><rect x="60" y="11" width="1" height="1" fill="#ce9178" fill-opacity="0.55"/><rect x="61" y="10" width="1" height="1" fill="#ce9178" fill-opacity="0.28"/><rect x="61" y="11" width="1" height="1" fill="#ce9178" fill-opacity="0.55"/><rect x="62" y="10" width="1" height="1" fill="#ce9178" fill-opacity="0.28"/><rect x="62" y="11" width="1" height="1" fill="#ce9178" fill-opacity="0.55"/><rect x="63" y="10" width="1" height="1" fill="#ce9178" fill-opacity="0.28"/><rect x="63" y="11" width="1" height="1" fill="#ce9178" fill-opacity="0.55"/><rect x="64" y="10" width="1" height="1" fill="#ce9178" fill-opacity="0.28"/><rect x="64" y="11" width="1" height="1" fill="#ce9178" fill-opacity="0.55"/><rect x="65" y="10" width="1" height="1" fill="#ce9178" fill-opacity="0.38"/><rect x="65" y="11" width="1" height="1" fill="#ce9178" fill-opacity="0.75"/><rect x="66" y="10" width="1" height="1" fill="#ce9178" fill-opacity="0.28"/><rect x="66" y="11" width="1" height="1" fill="#ce9178" fill-opacity="0.55"/><rect x="67" y="10" width="1" height="1" fill="#ce9178" fill-opacity="0.28"/><rect x="67" y="11" width="1" height="1" fill="#ce9178" fill-opacity="0.55"/><rect x="68" y="10" width="1" height="1" fill="#ce9178" fill-opacity="0.28"/><rect x="68" y="11" width="1" height="1" fill="#ce9178" fill-opacity="0.55"/><rect x="69" y="10" width="1" height="1" fill="#ce9178" fill-opacity="0.28"/><rect x="69" y="11" width="1" height="1" fill="#ce9178" fill-opacity="0.55"/><rect x="70" y="10" width="1" height="1" fill="#ce9178" fill-opacity="0.38"/><rect x="70" y="11" width="1" height="1" fill="#ce9178" fill-opacity="0.75"/><rect x="71" y="10" width="1" height="1" fill="#ce9178" fill-opacity="0.28"/><rect x="71" y="11" width="1" height="1" fill="#ce9178" fill-opacity="0.55"/><rect x="72" y="10" width="1" height="1" fill="#ce9178" fill-opacity="0.28"/><rect x="72" y="11" width="1" height="1" fill="#ce9178" fill-opacity="0.55"/><rect x="73" y="10" width="1" height="1" fill="#ce9178" fill-opacity="0.38"/><rect x="73" y="11" width="1" height="1" fill="#ce9178" fill-opacity="0.75"/><rect x="74" y="10" width="1" height="1" fill="#ce9178" fill-opacity="0.28"/><rect x="74" y="11" width="1" height="1" fill="#ce9178" fill-opacity="0.55"/><rect x="75" y="10" width="1" height="1" fill="#ce9178" fill-opacity="0.28"/><rect x="75" y="11" width="1" height="1" fill="#ce9178" fill-opacity="0.55"/><rect x="76" y="10" width="1" height="1" fill="#ce9178" fill-opacity="0.28"/><rect x="76" y="11" width="1" height="1" fill="#ce9178" fill-opacity="0.55"/><rect x="77" y="10" width="1" height="1" fill="#ce9178" fill-opacity="0.28"/><rect x="77" y="11" width="1" height="1" fill="#ce9178" fill-opacity="0.55"/><rect x="78" y="10" width="1" height="1" fill="#ce9178" fill-opacity="0.28"/><rect x="78" y="11" width="1" height="1" fill="#ce9178" fill-opacity="0.55"/><rect x="79" y="10" width="1" height="1" fill="#ce9178" fill-opacity="0.38"/><rect x="79" y="11" width="1" height="1" fill="#ce9178" fill-opacity="0.75"/><rect x="80" y="10" width="1" height="1" fill="#ce9178" fill-opacity="0.28"/><rect x="80" y="11" width="1" height="1" fill="#ce9178" fill-opacity="0.55"/><rect x="81" y="10" width="1" height="1" fill="#ce9178" fill-opacity="0.28"/><rect x="81" y="11" width="1" height="1" fill="#ce9178" fill-opacity="0.55"/><rect x="82" y="10" width="1" height="1" fill="#ce9178" fill-opacity="0.28"/><rect x="82" y="11" width="1" height="1" fill="#ce9178" fill-opacity="0.55"/><rect x="83" y="10" width="1" height="1" fill="#ce9178" fill-opacity="0.28"/><rect x="83" y="11" width="1" height="1" fill="#ce9178" fill-opacity="0.55"/><rect x="84" y="10" width="1" height="1" fill="#ce9178" fill-opacity="0.38"/><rect x="84" y="11" width="1" height="1" fill="#ce9178" fill-opacity="0.75"/><rect x="85" y="10" width="1" height="1" fill="#ce9178" fill-opacity="0.28"/><rect x="85" y="11" width="1" height="1" fill="#ce9178" fill-opacity="0.55"/><rect x="86" y="10" width="1" height="1" fill="#ce9178" fill-opacity="0.28"/><rect x="86" y="11" width="1" height="1" fill="#ce9178" fill-opacity="0.55"/><rect x="87" y="10" width="1" height="1" fill="#ce9178" fill-opacity="0.38"/><rect x="87" y="11" width="1" height="1" fill="#ce9178" fill-opacity="0.75"/><rect x="88" y="10" width="1" height="1" fill="#ce9178" fill-opacity="0.28"/><rect x="88" y="11" width="1" height="1" fill="#ce9178" fill-opacity="0.55"/><rect x="89" y="10" width="1" height="1" fill="#ce9178" fill-opacity="0.28"/><rect x="89" y="11" width="1" height="1" fill="#ce9178" fill-opacity="0.55"/><rect x="90" y="10" width="1" height="1" fill="#ce9178" fill-opacity="0.28"/><rect x="90" y="11" width="1" height="1" fill="#ce9178" fill-opacity="0.55"/><rect x="91" y="10" width="1" height="1" fill="#ce9178" fill-opacity="0.38"/><rect x="91" y="11" width="1" height="1" fill="#ce9178" fill-opacity="0.75"/><rect x="92" y="10" width="1" height="1" fill="#ce9178" fill-opacity="0.28"/><rect x="92" y="11" width="1" height="1" fill="#ce9178" fill-opacity="0.55"/><rect x="93" y="10" width="1" height="1" fill="#ce9178" fill-opacity="0.28"/><rect x="93" y="11" width="1" height="1" fill="#ce9178" fill-opacity="0.55"/><rect x="94" y="10" width="1" height="1" fill="#ce9178" fill-opacity="0.28"/><rect x="94" y="11" width="1" height="1" fill="#ce9178" fill-opacity="0.55"/><rect x="95" y="10" width="1" height="1" fill="#ce9178" fill-opacity="0.28"/><rect x="95" y="11" width="1" height="1" fill="#ce9178" fill-opacity="0.55"/><rect x="96" y="10" width="1" height="1" fill="#ce9178" fill-opacity="0.28"/><rect x="96" y="11" width="1" height="1" fill="#ce9178" fill-opacity="0.55"/><rect x="97" y="10" width="1" height="1" fill="#ce9178" fill-opacity="0.38"/><rect x="97" y="11" width="1" height="1" fill="#ce9178" fill-opacity="0.75"/><rect x="98" y="10" width="1" height="1" fill="#ce9178" fill-opacity="0.38"/><rect x="98" y="11" width="1" height="1" fill="#ce9178" fill-opacity="0.75"/><rect x="99" y="10" width="1" height="1" fill="#ce9178" fill-opacity="0.12"/><rect x="99" y="11" width="1" height="1" fill="#ce9178" fill-opacity="0.25"/><rect x="100" y="10" width="1" height="1" fill="#ce9178" fill-opacity="0.38"/><rect x="100" y="11" width="1" height="1" fill="#ce9178" fill-opacity="0.75"/><rect x="101" y="10" width="1" height="1" fill="#ce9178" fill-opacity="0.28"/><rect x="101" y="11" width="1" height="1" fill="#ce9178" fill-opacity="0.55"/><rect x="102" y="10" width="1" height="1" fill="#ce9178" fill-opacity="0.28"/><rect x="102" y="11" width="1" height="1" fill="#ce9178" fill-opacity="0.55"/><rect x="103" y="10" width="1" height="1" fill="#ce9178" fill-opacity="0.28"/><rect x="103" y="11" width="1" height="1" fill="#ce9178" fill-opacity="0.55"/><rect x="104" y="10" width="1" height="1" fill="#ce9178" fill-opacity="0.28"/><rect x="104" y="11" width="1" height="1" fill="#ce9178" fill-opacity="0.55"/><rect x="105" y="10" width="1" height="1" fill="#ce9178" fill-opacity="0.28"/><rect x="105" y="11" width="1" height="1" fill="#ce9178" fill-opacity="0.55"/><rect x="106" y="10" width="1" height="1" fill="#ce9178" fill-opacity="0.28"/><rect x="106" y="11" width="1" height="1" fill="#ce9178" fill-opacity="0.55"/><rect x="107" y="10" width="1" height="1" fill="#ce9178" fill-opacity="0.28"/><rect x="107" y="11" width="1" height="1" fill="#ce9178" fill-opacity="0.55"/><rect x="108" y="10" width="1" height="1" fill="#ce9178" fill-opacity="0.38"/><rect x="108" y="11" width="1" height="1" fill="#ce9178" fill-opacity="0.75"/><rect x="109" y="10" width="1" height="1" fill="#ce9178" fill-opacity="0.28"/><rect x="109" y="11" width="1" height="1" fill="#ce9178" fill-opacity="0.55"/><rect x="110" y="10" width="1" height="1" fill="#ce9178" fill-opacity="0.28"/><rect x="110" y="11" width="1" height="1" fill="#ce9178" fill-opacity="0.55"/><rect x="111" y="10" width="1" height="1" fill="#ce9178" fill-opacity="0.28"/><rect x="111" y="11" width="1" height="1" fill="#ce9178" fill-opacity="0.55"/><rect x="112" y="10" width="1" height="1" fill="#ce9178" fill-opacity="0.28"/><rect x="112" y="11" width="1" height="1" fill="#ce9178" fill-opacity="0.55"/><rect x="113" y="10" width="1" height="1" fill="#ce9178" fill-opacity="0.28"/><rect x="113" y="11" width="1" height="1" fill="#ce9178" fill-opacity="0.55"/><rect x="114" y="10" width="1" height="1" fill="#ce9178" fill-opacity="0.28"/><rect x="114" y="11" width="1" height="1" fill="#ce9178" fill-opacity="0.55"/><rect x="115" y="10" width="1" height="1" fill="#ce9178" fill-opacity="0.28"/><rect x="115" y="11" width="1" height="1" fill="#ce9178" fill-opacity="0.55"/><rect x="116" y="10" width="1" height="1" fill="#ce9178" fill-opacity="0.28"/><rect x="116" y="11" width="1" height="1" fill="#ce9178" fill-opacity="0.55"/><rect x="117" y="10" width="1" height="1" fill="#ce9178" fill-opacity="0.38"/><rect x="117" y="11" width="1" height="1" fill="#ce9178" fill-opacity="0.75"/><rect x="118" y="10" width="1" height="1" fill="#ce9178" fill-opacity="0.38"/><rect x="118" y="11" width="1" height="1" fill="#ce9178" fill-opacity="0.75"/><rect x="119" y="10" width="1" height="1" fill="#ce9178" fill-opacity="0.38"/><rect x="119" y="11" width="1" height="1" fill="#ce9178" fill-opacity="0.75"/><rect x="4" y="12" width="1" height="1" fill="#3dc9b0" fill-opacity="0.28"/><rect x="4" y="13" width="1" height="1" fill="#3dc9b0" fill-opacity="0.55"/><rect x="5" y="12" width="1" height="1" fill="#3dc9b0" fill-opacity="0.28"/><rect x="5" y="13" width="1" height="1" fill="#3dc9b0" fill-opacity="0.55"/><rect x="6" y="12" width="1" height="1" fill="#3dc9b0" fill-opacity="0.28"/><rect x="6" y="13" width="1" height="1" fill="#3dc9b0" fill-opacity="0.55"/><rect x="7" y="12" width="1" height="1" fill="#3dc9b0" fill-opacity="0.28"/><rect x="7" y="13" width="1" height="1" fill="#3dc9b0" fill-opacity="0.55"/><rect x="8" y="12" width="1" height="1" fill="#3dc9b0" fill-opacity="0.28"/><rect x="8" y="13" width="1" height="1" fill="#3dc9b0" fill-opacity="0.55"/><rect x="9" y="12" width="1" height="1" fill="#3dc9b0" fill-opacity="0.28"/><rect x="9" y="13" width="1" height="1" fill="#3dc9b0" fill-opacity="0.55"/><rect x="10" y="12" width="1" height="1" fill="#3dc9b0" fill-opacity="0.28"/><rect x="10" y="13" width="1" height="1" fill="#3dc9b0" fill-opacity="0.55"/><rect x="11" y="12" width="1" height="1" fill="#3dc9b0" fill-opacity="0.28"/><rect x="11" y="13" width="1" height="1" fill="#3dc9b0" fill-opacity="0.55"/><rect x="12" y="12" width="1" height="1" fill="#d4d4d4" fill-opacity="0.12"/><rect x="12" y="13" width="1" height="1" fill="#d4d4d4" fill-opacity="0.25"/><rect x="14" y="12" width="1" height="1" fill="#ce9178" fill-opacity="0.28"/><rect x="14" y="13" width="1" height="1" fill="#ce9178" fill-opacity="0.55"/><rect x="15" y="12" width="1" height="1" fill="#ce9178" fill-opacity="0.28"/><rect x="15" y="13" width="1" height="1" fill="#ce9178" fill-opacity="0.55"/><rect x="16" y="12" width="1" height="1" fill="#ce9178" fill-opacity="0.28"/><rect x="16" y="13" width="1" height="1" fill="#ce9178" fill-opacity="0.55"/><rect x="17" y="12" width="1" height="1" fill="#ce9178" fill-opacity="0.38"/><rect x="17" y="13" width="1" height="1" fill="#ce9178" fill-opacity="0.75"/><rect x="4" y="14" width="1" height="1" fill="#3dc9b0" fill-opacity="0.28"/><rect x="4" y="15" width="1" height="1" fill="#3dc9b0" fill-opacity="0.55"/><rect x="5" y="14" width="1" height="1" fill="#3dc9b0" fill-opacity="0.28"/><rect x="5" y="15" width="1" height="1" fill="#3dc9b0" fill-opacity="0.55"/><rect x="6" y="14" width="1" height="1" fill="#3dc9b0" fill-opacity="0.28"/><rect x="6" y="15" width="1" height="1" fill="#3dc9b0" fill-opacity="0.55"/><rect x="7" y="14" width="1" height="1" fill="#3dc9b0" fill-opacity="0.28"/><rect x="7" y="15" width="1" height="1" fill="#3dc9b0" fill-opacity="0.55"/><rect x="8" y="14" width="1" height="1" fill="#3dc9b0" fill-opacity="0.28"/><rect x="8" y="15" width="1" height="1" fill="#3dc9b0" fill-opacity="0.55"/><rect x="9" y="14" width="1" height="1" fill="#3dc9b0" fill-opacity="0.28"/><rect x="9" y="15" width="1" height="1" fill="#3dc9b0" fill-opacity="0.55"/><rect x="10" y="14" width="1" height="1" fill="#3dc9b0" fill-opacity="0.28"/><rect x="10" y="15" width="1" height="1" fill="#3dc9b0" fill-opacity="0.55"/><rect x="11" y="14" width="1" height="1" fill="#3dc9b0" fill-opacity="0.38"/><rect x="11" y="15" width="1" height="1" fill="#3dc9b0" fill-opacity="0.75"/><rect x="12" y="14" width="1" height="1" fill="#d4d4d4" fill-opacity="0.12"/><rect x="12" y="15" width="1" height="1" fill="#d4d4d4" fill-opacity="0.25"/><rect x="14" y="14" width="1" height="1" fill="#b5cea8" fill-opacity="0.38"/><rect x="14" y="15" width="1" height="1" fill="#b5cea8" fill-opacity="0.75"/><rect x="15" y="14" width="1" height="1" fill="#b5cea8" fill-opacity="0.38"/><rect x="15" y="15" width="1" height="1" fill="#b5cea8" fill-opacity="0.75"/><rect x="16" y="14" width="1" height="1" fill="#b5cea8" fill-opacity="0.38"/><rect x="16" y="15" width="1" height="1" fill="#b5cea8" fill-opacity="0.75"/><rect x="17" y="14" width="1" height="1" fill="#b5cea8" fill-opacity="0.38"/><rect x="17" y="15" width="1" height="1" fill="#b5cea8" fill-opacity="0.75"/><rect x="18" y="14" width="1" height="1" fill="#b5cea8" fill-opacity="0.38"/><rect x="18" y="15" width="1" height="1" fill="#b5cea8" fill-opacity="0.75"/><rect x="19" y="14" width="1" height="1" fill="#b5cea8" fill-opacity="0.38"/><rect x="19" y="15" width="1" height="1" fill="#b5cea8" fill-opacity="0.75"/><rect x="4" y="16" width="1" height="1" fill="#3dc9b0" fill-opacity="0.38"/><rect x="4" y="17" width="1" height="1" fill="#3dc9b0" fill-opacity="0.75"/><rect x="5" y="16" width="1" height="1" fill="#3dc9b0" fill-opacity="0.28"/><rect x="5" y="17" width="1" height="1" fill="#3dc9b0" fill-opacity="0.55"/><rect x="6" y="16" width="1" height="1" fill="#3dc9b0" fill-opacity="0.28"/><rect x="6" y="17" width="1" height="1" fill="#3dc9b0" fill-opacity="0.55"/><rect x="7" y="16" width="1" height="1" fill="#3dc9b0" fill-opacity="0.28"/><rect x="7" y="17" width="1" height="1" fill="#3dc9b0" fill-opacity="0.55"/><rect x="8" y="16" width="1" height="1" fill="#d4d4d4" fill-opacity="0.12"/><rect x="8" y="17" width="1" height="1" fill="#d4d4d4" fill-opacity="0.25"/><rect x="10" y="16" width="1" height="1" fill="#ce9178" fill-opacity="0.28"/><rect x="10" y="17" width="1" height="1" fill="#ce9178" fill-opacity="0.55"/><rect x="11" y="16" width="1" height="1" fill="#ce9178" fill-opacity="0.28"/><rect x="11" y="17" width="1" height="1" fill="#ce9178" fill-opacity="0.55"/><rect x="12" y="16" width="1" height="1" fill="#ce9178" fill-opacity="0.28"/><rect x="12" y="17" width="1" height="1" fill="#ce9178" fill-opacity="0.55"/><rect x="13" y="16" width="1" height="1" fill="#ce9178" fill-opacity="0.12"/><rect x="13" y="17" width="1" height="1" fill="#ce9178" fill-opacity="0.25"/><rect x="14" y="16" width="1" height="1" fill="#ce9178" fill-opacity="0.28"/><rect x="14" y="17" width="1" height="1" fill="#ce9178" fill-opacity="0.55"/><rect x="15" y="16" width="1" height="1" fill="#ce9178" fill-opacity="0.38"/><rect x="15" y="17" width="1" height="1" fill="#ce9178" fill-opacity="0.75"/><rect x="16" y="16" width="1" height="1" fill="#ce9178" fill-opacity="0.28"/><rect x="16" y="17" width="1" height="1" fill="#ce9178" fill-opacity="0.55"/><rect x="17" y="16" width="1" height="1" fill="#ce9178" fill-opacity="0.38"/><rect x="17" y="17" width="1" height="1" fill="#ce9178" fill-opacity="0.75"/><rect x="18" y="16" width="1" height="1" fill="#ce9178" fill-opacity="0.28"/><rect x="18" y="17" width="1" height="1" fill="#ce9178" fill-opacity="0.55"/><rect x="19" y="16" width="1" height="1" fill="#ce9178" fill-opacity="0.38"/><rect x="19" y="17" width="1" height="1" fill="#ce9178" fill-opacity="0.75"/><rect x="20" y="16" width="1" height="1" fill="#ce9178" fill-opacity="0.28"/><rect x="20" y="17" width="1" height="1" fill="#ce9178" fill-opacity="0.55"/><rect x="21" y="16" width="1" height="1" fill="#ce9178" fill-opacity="0.12"/><rect x="21" y="17" width="1" height="1" fill="#ce9178" fill-opacity="0.25"/><rect x="22" y="16" width="1" height="1" fill="#ce9178" fill-opacity="0.38"/><rect x="22" y="17" width="1" height="1" fill="#ce9178" fill-opacity="0.75"/><rect x="23" y="16" width="1" height="1" fill="#ce9178" fill-opacity="0.28"/><rect x="23" y="17" width="1" height="1" fill="#ce9178" fill-opacity="0.55"/><rect x="24" y="16" width="1" height="1" fill="#ce9178" fill-opacity="0.28"/><rect x="24" y="17" width="1" height="1" fill="#ce9178" fill-opacity="0.55"/><rect x="25" y="16" width="1" height="1" fill="#ce9178" fill-opacity="0.28"/><rect x="25" y="17" width="1" height="1" fill="#ce9178" fill-opacity="0.55"/><rect x="26" y="16" width="1" height="1" fill="#ce9178" fill-opacity="0.38"/><rect x="26" y="17" width="1" height="1" fill="#ce9178" fill-opacity="0.75"/><rect x="27" y="16" width="1" height="1" fill="#ce9178" fill-opacity="0.12"/><rect x="27" y="17" width="1" height="1" fill="#ce9178" fill-opacity="0.25"/><rect x="28" y="16" width="1" height="1" fill="#ce9178" fill-opacity="0.28"/><rect x="28" y="17" width="1" height="1" fill="#ce9178" fill-opacity="0.55"/><rect x="29" y="16" width="1" height="1" fill="#ce9178" fill-opacity="0.28"/><rect x="29" y="17" width="1" height="1" fill="#ce9178" fill-opacity="0.55"/><rect x="30" y="16" width="1" height="1" fill="#ce9178" fill-opacity="0.28"/><rect x="30" y="17" width="1" height="1" fill="#ce9178" fill-opacity="0.55"/><rect x="31" y="16" width="1" height="1" fill="#ce9178" fill-opacity="0.38"/><rect x="31" y="17" width="1" height="1" fill="#ce9178" fill-opacity="0.75"/><rect x="32" y="16" width="1" height="1" fill="#ce9178" fill-opacity="0.12"/><rect x="32" y="17" width="1" height="1" fill="#ce9178" fill-opacity="0.25"/><rect x="33" y="16" width="1" height="1" fill="#ce9178" fill-opacity="0.38"/><rect x="33" y="17" width="1" height="1" fill="#ce9178" fill-opacity="0.75"/><rect x="34" y="16" width="1" height="1" fill="#ce9178" fill-opacity="0.28"/><rect x="34" y="17" width="1" height="1" fill="#ce9178" fill-opacity="0.55"/><rect x="35" y="16" width="1" height="1" fill="#ce9178" fill-opacity="0.28"/><rect x="35" y="17" width="1" height="1" fill="#ce9178" fill-opacity="0.55"/><rect x="36" y="16" width="1" height="1" fill="#ce9178" fill-opacity="0.28"/><rect x="36" y="17" width="1" height="1" fill="#ce9178" fill-opacity="0.55"/><rect x="37" y="16" width="1" height="1" fill="#ce9178" fill-opacity="0.38"/><rect x="37" y="17" width="1" height="1" fill="#ce9178" fill-opacity="0.75"/><rect x="38" y="16" width="1" height="1" fill="#ce9178" fill-opacity="0.38"/><rect x="38" y="17" width="1" height="1" fill="#ce9178" fill-opacity="0.75"/><rect x="39" y="16" width="1" height="1" fill="#ce9178" fill-opacity="0.28"/><rect x="39" y="17" width="1" height="1" fill="#ce9178" fill-opacity="0.55"/><rect x="40" y="16" width="1" height="1" fill="#ce9178" fill-opacity="0.38"/><rect x="40" y="17" width="1" height="1" fill="#ce9178" fill-opacity="0.75"/><rect x="41" y="16" width="1" height="1" fill="#ce9178" fill-opacity="0.28"/><rect x="41" y="17" width="1" height="1" fill="#ce9178" fill-opacity="0.55"/><rect x="42" y="16" width="1" height="1" fill="#ce9178" fill-opacity="0.38"/><rect x="42" y="17" width="1" height="1" fill="#ce9178" fill-opacity="0.75"/><rect x="43" y="16" width="1" height="1" fill="#ce9178" fill-opacity="0.28"/><rect x="43" y="17" width="1" height="1" fill="#ce9178" fill-opacity="0.55"/><rect x="44" y="16" width="1" height="1" fill="#ce9178" fill-opacity="0.28"/><rect x="44" y="17" width="1" height="1" fill="#ce9178" fill-opacity="0.55"/><rect x="45" y="16" width="1" height="1" fill="#ce9178" fill-opacity="0.28"/><rect x="45" y="17" width="1" height="1" fill="#ce9178" fill-opacity="0.55"/><rect x="46" y="16" width="1" height="1" fill="#ce9178" fill-opacity="0.28"/><rect x="46" y="17" width="1" height="1" fill="#ce9178" fill-opacity="0.55"/><rect x="47" y="16" width="1" height="1" fill="#ce9178" fill-opacity="0.28"/><rect x="47" y="17" width="1" height="1" fill="#ce9178" fill-opacity="0.55"/><rect x="4" y="18" width="1" height="1" fill="#3dc9b0" fill-opacity="0.38"/><rect x="4" y="19" width="1" height="1" fill="#3dc9b0" fill-opacity="0.75"/><rect x="5" y="18" width="1" height="1" fill="#3dc9b0" fill-opacity="0.28"/><rect x="5" y="19" width="1" height="1" fill="#3dc9b0" fill-opacity="0.55"/><rect x="6" y="18" width="1" height="1" fill="#3dc9b0" fill-opacity="0.28"/><rect x="6" y="19" width="1" height="1" fill="#3dc9b0" fill-opacity="0.55"/><rect x="7" y="18" width="1" height="1" fill="#3dc9b0" fill-opacity="0.28"/><rect x="7" y="19" width="1" height="1" fill="#3dc9b0" fill-opacity="0.55"/><rect x="8" y="18" width="1" height="1" fill="#3dc9b0" fill-opacity="0.38"/><rect x="8" y="19" width="1" height="1" fill="#3dc9b0" fill-opacity="0.75"/><rect x="9" y="18" width="1" height="1" fill="#d4d4d4" fill-opacity="0.12"/><rect x="9" y="19" width="1" height="1" fill="#d4d4d4" fill-opacity="0.25"/><rect x="6" y="20" width="1" height="1" fill="#3dc9b0" fill-opacity="0.28"/><rect x="6" y="21" width="1" height="1" fill="#3dc9b0" fill-opacity="0.55"/><rect x="7" y="20" width="1" height="1" fill="#3dc9b0" fill-opacity="0.28"/><rect x="7" y="21" width="1" height="1" fill="#3dc9b0" fill-opacity="0.55"/><rect x="8" y="20" width="1" height="1" fill="#3dc9b0" fill-opacity="0.28"/><rect x="8" y="21" width="1" height="1" fill="#3dc9b0" fill-opacity="0.55"/><rect x="9" y="20" width="1" height="1" fill="#3dc9b0" fill-opacity="0.12"/><rect x="9" y="21" width="1" height="1" fill="#3dc9b0" fill-opacity="0.25"/><rect x="10" y="20" width="1" height="1" fill="#3dc9b0" fill-opacity="0.28"/><rect x="10" y="21" width="1" height="1" fill="#3dc9b0" fill-opacity="0.55"/><rect x="11" y="20" width="1" height="1" fill="#3dc9b0" fill-opacity="0.28"/><rect x="11" y="21" width="1" height="1" fill="#3dc9b0" fill-opacity="0.55"/><rect x="12" y="20" width="1" height="1" fill="#3dc9b0" fill-opacity="0.38"/><rect x="12" y="21" width="1" height="1" fill="#3dc9b0" fill-opacity="0.75"/><rect x="13" y="20" width="1" height="1" fill="#3dc9b0" fill-opacity="0.28"/><rect x="13" y="21" width="1" height="1" fill="#3dc9b0" fill-opacity="0.55"/><rect x="14" y="20" width="1" height="1" fill="#3dc9b0" fill-opacity="0.28"/><rect x="14" y="21" width="1" height="1" fill="#3dc9b0" fill-opacity="0.55"/><rect x="15" y="20" width="1" height="1" fill="#3dc9b0" fill-opacity="0.28"/><rect x="15" y="21" width="1" height="1" fill="#3dc9b0" fill-opacity="0.55"/><rect x="16" y="20" width="1" height="1" fill="#d4d4d4" fill-opacity="0.12"/><rect x="16" y="21" width="1" height="1" fill="#d4d4d4" fill-opacity="0.25"/><rect x="18" y="20" width="1" height="1" fill="#b5cea8" fill-opacity="0.38"/><rect x="18" y="21" width="1" height="1" fill="#b5cea8" fill-opacity="0.75"/><rect x="19" y="20" width="1" height="1" fill="#b5cea8" fill-opacity="0.38"/><rect x="19" y="21" width="1" height="1" fill="#b5cea8" fill-opacity="0.75"/><rect x="20" y="20" width="1" height="1" fill="#b5cea8" fill-opacity="0.38"/><rect x="20" y="21" width="1" height="1" fill="#b5cea8" fill-opacity="0.75"/><rect x="21" y="20" width="1" height="1" fill="#b5cea8" fill-opacity="0.38"/><rect x="21" y="21" width="1" height="1" fill="#b5cea8" fill-opacity="0.75"/><rect x="6" y="22" width="1" height="1" fill="#3dc9b0" fill-opacity="0.28"/><rect x="6" y="23" width="1" height="1" fill="#3dc9b0" fill-opacity="0.55"/><rect x="7" y="22" width="1" height="1" fill="#3dc9b0" fill-opacity="0.28"/><rect x="7" y="23" width="1" height="1" fill="#3dc9b0" fill-opacity="0.55"/><rect x="8" y="22" width="1" height="1" fill="#3dc9b0" fill-opacity="0.28"/><rect x="8" y="23" width="1" height="1" fill="#3dc9b0" fill-opacity="0.55"/><rect x="9" y="22" width="1" height="1" fill="#3dc9b0" fill-opacity="0.12"/><rect x="9" y="23" width="1" height="1" fill="#3dc9b0" fill-opacity="0.25"/><rect x="10" y="22" width="1" height="1" fill="#3dc9b0" fill-opacity="0.28"/><rect x="10" y="23" width="1" height="1" fill="#3dc9b0" fill-opacity="0.55"/><rect x="11" y="22" width="1" height="1" fill="#3dc9b0" fill-opacity="0.38"/><rect x="11" y="23" width="1" height="1" fill="#3dc9b0" fill-opacity="0.75"/><rect x="12" y="22" width="1" height="1" fill="#3dc9b0" fill-opacity="0.38"/><rect x="12" y="23" width="1" height="1" fill="#3dc9b0" fill-opacity="0.75"/><rect x="13" y="22" width="1" height="1" fill="#3dc9b0" fill-opacity="0.28"/><rect x="13" y="23" width="1" height="1" fill="#3dc9b0" fill-opacity="0.55"/><rect x="14" y="22" width="1" height="1" fill="#d4d4d4" fill-opacity="0.12"/><rect x="14" y="23" width="1" height="1" fill="#d4d4d4" fill-opacity="0.25"/><rect x="16" y="22" width="1" height="1" fill="#b5cea8" fill-opacity="0.38"/><rect x="16" y="23" width="1" height="1" fill="#b5cea8" fill-opacity="0.75"/><rect x="6" y="24" width="1" height="1" fill="#3dc9b0" fill-opacity="0.28"/><rect x="6" y="25" width="1" height="1" fill="#3dc9b0" fill-opacity="0.55"/><rect x="7" y="24" width="1" height="1" fill="#3dc9b0" fill-opacity="0.28"/><rect x="7" y="25" width="1" height="1" fill="#3dc9b0" fill-opacity="0.55"/><rect x="8" y="24" width="1" height="1" fill="#3dc9b0" fill-opacity="0.28"/><rect x="8" y="25" width="1" height="1" fill="#3dc9b0" fill-opacity="0.55"/><rect x="9" y="24" width="1" height="1" fill="#3dc9b0" fill-opacity="0.38"/><rect x="9" y="25" width="1" height="1" fill="#3dc9b0" fill-opacity="0.75"/><rect x="10" y="24" width="1" height="1" fill="#3dc9b0" fill-opacity="0.28"/><rect x="10" y="25" width="1" height="1" fill="#3dc9b0" fill-opacity="0.55"/><rect x="11" y="24" width="1" height="1" fill="#3dc9b0" fill-opacity="0.28"/><rect x="11" y="25" width="1" height="1" fill="#3dc9b0" fill-opacity="0.55"/><rect x="12" y="24" width="1" height="1" fill="#3dc9b0" fill-opacity="0.38"/><rect x="12" y="25" width="1" height="1" fill="#3dc9b0" fill-opacity="0.75"/><rect x="13" y="24" width="1" height="1" fill="#3dc9b0" fill-opacity="0.12"/><rect x="13" y="25" width="1" height="1" fill="#3dc9b0" fill-opacity="0.25"/><rect x="14" y="24" width="1" height="1" fill="#3dc9b0" fill-opacity="0.28"/><rect x="14" y="25" width="1" height="1" fill="#3dc9b0" fill-opacity="0.55"/><rect x="15" y="24" width="1" height="1" fill="#3dc9b0" fill-opacity="0.28"/><rect x="15" y="25" width="1" height="1" fill="#3dc9b0" fill-opacity="0.55"/><rect x="16" y="24" width="1" height="1" fill="#3dc9b0" fill-opacity="0.28"/><rect x="16" y="25" width="1" height="1" fill="#3dc9b0" fill-opacity="0.55"/><rect x="17" y="24" width="1" height="1" fill="#3dc9b0" fill-opacity="0.28"/><rect x="17" y="25" width="1" height="1" fill="#3dc9b0" fill-opacity="0.55"/><rect x="18" y="24" width="1" height="1" fill="#d4d4d4" fill-opacity="0.12"/><rect x="18" y="25" width="1" height="1" fill="#d4d4d4" fill-opacity="0.25"/><rect x="20" y="24" width="1" height="1" fill="#b5cea8" fill-opacity="0.38"/><rect x="20" y="25" width="1" height="1" fill="#b5cea8" fill-opacity="0.75"/><rect x="21" y="24" width="1" height="1" fill="#b5cea8" fill-opacity="0.38"/><rect x="21" y="25" width="1" height="1" fill="#b5cea8" fill-opacity="0.75"/><rect x="0" y="26" width="1" height="1" fill="#3dc9b0" fill-opacity="0.28"/><rect x="0" y="27" width="1" height="1" fill="#3dc9b0" fill-opacity="0.55"/><rect x="1" y="26" width="1" height="1" fill="#3dc9b0" fill-opacity="0.28"/><rect x="1" y="27" width="1" height="1" fill="#3dc9b0" fill-opacity="0.55"/><rect x="2" y="26" width="1" height="1" fill="#3dc9b0" fill-opacity="0.38"/><rect x="2" y="27" width="1" height="1" fill="#3dc9b0" fill-opacity="0.75"/><rect x="3" y="26" width="1" height="1" fill="#3dc9b0" fill-opacity="0.28"/><rect x="3" y="27" width="1" height="1" fill="#3dc9b0" fill-opacity="0.55"/><rect x="4" y="26" width="1" height="1" fill="#3dc9b0" fill-opacity="0.38"/><rect x="4" y="27" width="1" height="1" fill="#3dc9b0" fill-opacity="0.75"/><rect x="5" y="26" width="1" height="1" fill="#3dc9b0" fill-opacity="0.28"/><rect x="5" y="27" width="1" height="1" fill="#3dc9b0" fill-opacity="0.55"/><rect x="6" y="26" width="1" height="1" fill="#3dc9b0" fill-opacity="0.28"/><rect x="6" y="27" width="1" height="1" fill="#3dc9b0" fill-opacity="0.55"/><rect x="7" y="26" width="1" height="1" fill="#3dc9b0" fill-opacity="0.12"/><rect x="7" y="27" width="1" height="1" fill="#3dc9b0" fill-opacity="0.25"/><rect x="8" y="26" width="1" height="1" fill="#3dc9b0" fill-opacity="0.28"/><rect x="8" y="27" width="1" height="1" fill="#3dc9b0" fill-opacity="0.55"/><rect x="9" y="26" width="1" height="1" fill="#3dc9b0" fill-opacity="0.38"/><rect x="9" y="27" width="1" height="1" fill="#3dc9b0" fill-opacity="0.75"/><rect x="10" y="26" width="1" height="1" fill="#3dc9b0" fill-opacity="0.28"/><rect x="10" y="27" width="1" height="1" fill="#3dc9b0" fill-opacity="0.55"/><rect x="11" y="26" width="1" height="1" fill="#3dc9b0" fill-opacity="0.28"/><rect x="11" y="27" width="1" height="1" fill="#3dc9b0" fill-opacity="0.55"/><rect x="12" y="26" width="1" height="1" fill="#d4d4d4" fill-opacity="0.12"/><rect x="12" y="27" width="1" height="1" fill="#d4d4d4" fill-opacity="0.25"/><rect x="2" y="28" width="1" height="1" fill="#3dc9b0" fill-opacity="0.28"/><rect x="2" y="29" width="1" height="1" fill="#3dc9b0" fill-opacity="0.55"/><rect x="3" y="28" width="1" height="1" fill="#3dc9b0" fill-opacity="0.38"/><rect x="3" y="29" width="1" height="1" fill="#3dc9b0" fill-opacity="0.75"/><rect x="4" y="28" width="1" height="1" fill="#3dc9b0" fill-opacity="0.28"/><rect x="4" y="29" width="1" height="1" fill="#3dc9b0" fill-opacity="0.55"/><rect x="5" y="28" width="1" height="1" fill="#3dc9b0" fill-opacity="0.38"/><rect x="5" y="29" width="1" height="1" fill="#3dc9b0" fill-opacity="0.75"/><rect x="6" y="28" width="1" height="1" fill="#3dc9b0" fill-opacity="0.28"/><rect x="6" y="29" width="1" height="1" fill="#3dc9b0" fill-opacity="0.55"/><rect x="7" y="28" width="1" height="1" fill="#3dc9b0" fill-opacity="0.38"/><rect x="7" y="29" width="1" height="1" fill="#3dc9b0" fill-opacity="0.75"/><rect x="8" y="28" width="1" height="1" fill="#3dc9b0" fill-opacity="0.12"/><rect x="8" y="29" width="1" height="1" fill="#3dc9b0" fill-opacity="0.25"/><rect x="9" y="28" width="1" height="1" fill="#3dc9b0" fill-opacity="0.28"/><rect x="9" y="29" width="1" height="1" fill="#3dc9b0" fill-opacity="0.55"/><rect x="10" y="28" width="1" height="1" fill="#3dc9b0" fill-opacity="0.28"/><rect x="10" y="29" width="1" height="1" fill="#3dc9b0" fill-opacity="0.55"/><rect x="11" y="28" width="1" height="1" fill="#3dc9b0" fill-opacity="0.28"/><rect x="11" y="29" width="1" height="1" fill="#3dc9b0" fill-opacity="0.55"/><rect x="12" y="28" width="1" height="1" fill="#3dc9b0" fill-opacity="0.38"/><rect x="12" y="29" width="1" height="1" fill="#3dc9b0" fill-opacity="0.75"/><rect x="13" y="28" width="1" height="1" fill="#3dc9b0" fill-opacity="0.28"/><rect x="13" y="29" width="1" height="1" fill="#3dc9b0" fill-opacity="0.55"/><rect x="14" y="28" width="1" height="1" fill="#3dc9b0" fill-opacity="0.28"/><rect x="14" y="29" width="1" height="1" fill="#3dc9b0" fill-opacity="0.55"/><rect x="15" y="28" width="1" height="1" fill="#d4d4d4" fill-opacity="0.12"/><rect x="15" y="29" width="1" height="1" fill="#d4d4d4" fill-opacity="0.25"/><rect x="4" y="30" width="1" height="1" fill="#3dc9b0" fill-opacity="0.38"/><rect x="4" y="31" width="1" height="1" fill="#3dc9b0" fill-opacity="0.75"/><rect x="5" y="30" width="1" height="1" fill="#3dc9b0" fill-opacity="0.38"/><rect x="5" y="31" width="1" height="1" fill="#3dc9b0" fill-opacity="0.75"/><rect x="6" y="30" width="1" height="1" fill="#3dc9b0" fill-opacity="0.12"/><rect x="6" y="31" width="1" height="1" fill="#3dc9b0" fill-opacity="0.25"/><rect x="7" y="30" width="1" height="1" fill="#3dc9b0" fill-opacity="0.28"/><rect x="7" y="31" width="1" height="1" fill="#3dc9b0" fill-opacity="0.55"/><rect x="8" y="30" width="1" height="1" fill="#3dc9b0" fill-opacity="0.28"/><rect x="8" y="31" width="1" height="1" fill="#3dc9b0" fill-opacity="0.55"/><rect x="9" y="30" width="1" height="1" fill="#3dc9b0" fill-opacity="0.28"/><rect x="9" y="31" width="1" height="1" fill="#3dc9b0" fill-opacity="0.55"/><rect x="10" y="30" width="1" height="1" fill="#3dc9b0" fill-opacity="0.38"/><rect x="10" y="31" width="1" height="1" fill="#3dc9b0" fill-opacity="0.75"/><rect x="11" y="30" width="1" height="1" fill="#3dc9b0" fill-opacity="0.28"/><rect x="11" y="31" width="1" height="1" fill="#3dc9b0" fill-opacity="0.55"/><rect x="12" y="30" width="1" height="1" fill="#3dc9b0" fill-opacity="0.28"/><rect x="12" y="31" width="1" height="1" fill="#3dc9b0" fill-opacity="0.55"/><rect x="13" y="30" width="1" height="1" fill="#d4d4d4" fill-opacity="0.12"/><rect x="13" y="31" width="1" height="1" fill="#d4d4d4" fill-opacity="0.25"/><rect x="6" y="32" width="1" height="1" fill="#3dc9b0" fill-opacity="0.28"/><rect x="6" y="33" width="1" height="1" fill="#3dc9b0" fill-opacity="0.55"/><rect x="7" y="32" width="1" height="1" fill="#3dc9b0" fill-opacity="0.38"/><rect x="7" y="33" width="1" height="1" fill="#3dc9b0" fill-opacity="0.75"/><rect x="8" y="32" width="1" height="1" fill="#3dc9b0" fill-opacity="0.12"/><rect x="8" y="33" width="1" height="1" fill="#3dc9b0" fill-opacity="0.25"/><rect x="9" y="32" width="1" height="1" fill="#3dc9b0" fill-opacity="0.38"/><rect x="9" y="33" width="1" height="1" fill="#3dc9b0" fill-opacity="0.75"/><rect x="10" y="32" width="1" height="1" fill="#3dc9b0" fill-opacity="0.28"/><rect x="10" y="33" width="1" height="1" fill="#3dc9b0" fill-opacity="0.55"/><rect x="11" y="32" width="1" height="1" fill="#3dc9b0" fill-opacity="0.28"/><rect x="11" y="33" width="1" height="1" fill="#3dc9b0" fill-opacity="0.55"/><rect x="12" y="32" width="1" height="1" fill="#3dc9b0" fill-opacity="0.28"/><rect x="12" y="33" width="1" height="1" fill="#3dc9b0" fill-opacity="0.55"/><rect x="13" y="32" width="1" height="1" fill="#d4d4d4" fill-opacity="0.12"/><rect x="13" y="33" width="1" height="1" fill="#d4d4d4" fill-opacity="0.25"/><rect x="15" y="32" width="1" height="1" fill="#ce9178" fill-opacity="0.28"/><rect x="15" y="33" width="1" height="1" fill="#ce9178" fill-opacity="0.55"/><rect x="16" y="32" width="1" height="1" fill="#ce9178" fill-opacity="0.28"/><rect x="16" y="33" width="1" height="1" fill="#ce9178" fill-opacity="0.55"/><rect x="17" y="32" width="1" height="1" fill="#ce9178" fill-opacity="0.38"/><rect x="17" y="33" width="1" height="1" fill="#ce9178" fill-opacity="0.75"/><rect x="18" y="32" width="1" height="1" fill="#ce9178" fill-opacity="0.28"/><rect x="18" y="33" width="1" height="1" fill="#ce9178" fill-opacity="0.55"/><rect x="6" y="34" width="1" height="1" fill="#3dc9b0" fill-opacity="0.38"/><rect x="6" y="35" width="1" height="1" fill="#3dc9b0" fill-opacity="0.75"/><rect x="7" y="34" width="1" height="1" fill="#3dc9b0" fill-opacity="0.28"/><rect x="7" y="35" width="1" height="1" fill="#3dc9b0" fill-opacity="0.55"/><rect x="8" y="34" width="1" height="1" fill="#3dc9b0" fill-opacity="0.28"/><rect x="8" y="35" width="1" height="1" fill="#3dc9b0" fill-opacity="0.55"/><rect x="9" y="34" width="1" height="1" fill="#3dc9b0" fill-opacity="0.28"/><rect x="9" y="35" width="1" height="1" fill="#3dc9b0" fill-opacity="0.55"/><rect x="10" y="34" width="1" height="1" fill="#3dc9b0" fill-opacity="0.28"/><rect x="10" y="35" width="1" height="1" fill="#3dc9b0" fill-opacity="0.55"/><rect x="11" y="34" width="1" height="1" fill="#3dc9b0" fill-opacity="0.12"/><rect x="11" y="35" width="1" height="1" fill="#3dc9b0" fill-opacity="0.25"/><rect x="12" y="34" width="1" height="1" fill="#3dc9b0" fill-opacity="0.38"/><rect x="12" y="35" width="1" height="1" fill="#3dc9b0" fill-opacity="0.75"/><rect x="13" y="34" width="1" height="1" fill="#3dc9b0" fill-opacity="0.28"/><rect x="13" y="35" width="1" height="1" fill="#3dc9b0" fill-opacity="0.55"/><rect x="14" y="34" width="1" height="1" fill="#3dc9b0" fill-opacity="0.38"/><rect x="14" y="35" width="1" height="1" fill="#3dc9b0" fill-opacity="0.75"/><rect x="15" y="34" width="1" height="1" fill="#3dc9b0" fill-opacity="0.28"/><rect x="15" y="35" width="1" height="1" fill="#3dc9b0" fill-opacity="0.55"/><rect x="16" y="34" width="1" height="1" fill="#3dc9b0" fill-opacity="0.38"/><rect x="16" y="35" width="1" height="1" fill="#3dc9b0" fill-opacity="0.75"/><rect x="17" y="34" width="1" height="1" fill="#3dc9b0" fill-opacity="0.28"/><rect x="17" y="35" width="1" height="1" fill="#3dc9b0" fill-opacity="0.55"/><rect x="18" y="34" width="1" height="1" fill="#3dc9b0" fill-opacity="0.12"/><rect x="18" y="35" width="1" height="1" fill="#3dc9b0" fill-opacity="0.25"/><rect x="19" y="34" width="1" height="1" fill="#3dc9b0" fill-opacity="0.38"/><rect x="19" y="35" width="1" height="1" fill="#3dc9b0" fill-opacity="0.75"/><rect x="20" y="34" width="1" height="1" fill="#3dc9b0" fill-opacity="0.28"/><rect x="20" y="35" width="1" height="1" fill="#3dc9b0" fill-opacity="0.55"/><rect x="21" y="34" width="1" height="1" fill="#3dc9b0" fill-opacity="0.28"/><rect x="21" y="35" width="1" height="1" fill="#3dc9b0" fill-opacity="0.55"/><rect x="22" y="34" width="1" height="1" fill="#3dc9b0" fill-opacity="0.38"/><rect x="22" y="35" width="1" height="1" fill="#3dc9b0" fill-opacity="0.75"/><rect x="23" y="34" width="1" height="1" fill="#3dc9b0" fill-opacity="0.38"/><rect x="23" y="35" width="1" height="1" fill="#3dc9b0" fill-opacity="0.75"/><rect x="24" y="34" width="1" height="1" fill="#d4d4d4" fill-opacity="0.12"/><rect x="24" y="35" width="1" height="1" fill="#d4d4d4" fill-opacity="0.25"/><rect x="26" y="34" width="1" height="1" fill="#ce9178" fill-opacity="0.38"/><rect x="26" y="35" width="1" height="1" fill="#ce9178" fill-opacity="0.75"/><rect x="27" y="34" width="1" height="1" fill="#ce9178" fill-opacity="0.28"/><rect x="27" y="35" width="1" height="1" fill="#ce9178" fill-opacity="0.55"/><rect x="28" y="34" width="1" height="1" fill="#ce9178" fill-opacity="0.38"/><rect x="28" y="35" width="1" height="1" fill="#ce9178" fill-opacity="0.75"/><rect x="29" y="34" width="1" height="1" fill="#ce9178" fill-opacity="0.28"/><rect x="29" y="35" width="1" height="1" fill="#ce9178" fill-opacity="0.55"/><rect x="30" y="34" width="1" height="1" fill="#ce9178" fill-opacity="0.38"/><rect x="30" y="35" width="1" height="1" fill="#ce9178" fill-opacity="0.75"/><rect x="31" y="34" width="1" height="1" fill="#ce9178" fill-opacity="0.28"/><rect x="31" y="35" width="1" height="1" fill="#ce9178" fill-opacity="0.55"/><rect x="32" y="34" width="1" height="1" fill="#ce9178" fill-opacity="0.38"/><rect x="32" y="35" width="1" height="1" fill="#ce9178" fill-opacity="0.75"/><rect x="6" y="36" width="1" height="1" fill="#3dc9b0" fill-opacity="0.38"/><rect x="6" y="37" width="1" height="1" fill="#3dc9b0" fill-opacity="0.75"/><rect x="7" y="36" width="1" height="1" fill="#3dc9b0" fill-opacity="0.28"/><rect x="7" y="37" width="1" height="1" fill="#3dc9b0" fill-opacity="0.55"/><rect x="8" y="36" width="1" height="1" fill="#3dc9b0" fill-opacity="0.28"/><rect x="8" y="37" width="1" height="1" fill="#3dc9b0" fill-opacity="0.55"/><rect x="9" y="36" width="1" height="1" fill="#3dc9b0" fill-opacity="0.28"/><rect x="9" y="37" width="1" height="1" fill="#3dc9b0" fill-opacity="0.55"/><rect x="10" y="36" width="1" height="1" fill="#3dc9b0" fill-opacity="0.28"/><rect x="10" y="37" width="1" height="1" fill="#3dc9b0" fill-opacity="0.55"/><rect x="11" y="36" width="1" height="1" fill="#3dc9b0" fill-opacity="0.12"/><rect x="11" y="37" width="1" height="1" fill="#3dc9b0" fill-opacity="0.25"/><rect x="12" y="36" width="1" height="1" fill="#3dc9b0" fill-opacity="0.38"/><rect x="12" y="37" width="1" height="1" fill="#3dc9b0" fill-opacity="0.75"/><rect x="13" y="36" width="1" height="1" fill="#3dc9b0" fill-opacity="0.28"/><rect x="13" y="37" width="1" height="1" fill="#3dc9b0" fill-opacity="0.55"/><rect x="14" y="36" width="1" height="1" fill="#3dc9b0" fill-opacity="0.38"/><rect x="14" y="37" width="1" height="1" fill="#3dc9b0" fill-opacity="0.75"/><rect x="15" y="36" width="1" height="1" fill="#3dc9b0" fill-opacity="0.28"/><rect x="15" y="37" width="1" height="1" fill="#3dc9b0" fill-opacity="0.55"/><rect x="16" y="36" width="1" height="1" fill="#3dc9b0" fill-opacity="0.38"/><rect x="16" y="37" width="1" height="1" fill="#3dc9b0" fill-opacity="0.75"/><rect x="17" y="36" width="1" height="1" fill="#3dc9b0" fill-opacity="0.28"/><rect x="17" y="37" width="1" height="1" fill="#3dc9b0" fill-opacity="0.55"/><rect x="18" y="36" width="1" height="1" fill="#3dc9b0" fill-opacity="0.12"/><rect x="18" y="37" width="1" height="1" fill="#3dc9b0" fill-opacity="0.25"/><rect x="19" y="36" width="1" height="1" fill="#3dc9b0" fill-opacity="0.28"/><rect x="19" y="37" width="1" height="1" fill="#3dc9b0" fill-opacity="0.55"/><rect x="20" y="36" width="1" height="1" fill="#3dc9b0" fill-opacity="0.28"/><rect x="20" y="37" width="1" height="1" fill="#3dc9b0" fill-opacity="0.55"/><rect x="21" y="36" width="1" height="1" fill="#3dc9b0" fill-opacity="0.38"/><rect x="21" y="37" width="1" height="1" fill="#3dc9b0" fill-opacity="0.75"/><rect x="22" y="36" width="1" height="1" fill="#3dc9b0" fill-opacity="0.28"/><rect x="22" y="37" width="1" height="1" fill="#3dc9b0" fill-opacity="0.55"/><rect x="23" y="36" width="1" height="1" fill="#3dc9b0" fill-opacity="0.28"/><rect x="23" y="37" width="1" height="1" fill="#3dc9b0" fill-opacity="0.55"/><rect x="24" y="36" width="1" height="1" fill="#d4d4d4" fill-opacity="0.12"/><rect x="24" y="37" width="1" height="1" fill="#d4d4d4" fill-opacity="0.25"/><rect x="26" y="36" width="1" height="1" fill="#b5cea8" fill-opacity="0.38"/><rect x="26" y="37" width="1" height="1" fill="#b5cea8" fill-opacity="0.75"/><rect x="6" y="38" width="1" height="1" fill="#3dc9b0" fill-opacity="0.38"/><rect x="6" y="39" width="1" height="1" fill="#3dc9b0" fill-opacity="0.75"/><rect x="7" y="38" width="1" height="1" fill="#3dc9b0" fill-opacity="0.28"/><rect x="7" y="39" width="1" height="1" fill="#3dc9b0" fill-opacity="0.55"/><rect x="8" y="38" width="1" height="1" fill="#3dc9b0" fill-opacity="0.28"/><rect x="8" y="39" width="1" height="1" fill="#3dc9b0" fill-opacity="0.55"/><rect x="9" y="38" width="1" height="1" fill="#3dc9b0" fill-opacity="0.28"/><rect x="9" y="39" width="1" height="1" fill="#3dc9b0" fill-opacity="0.55"/><rect x="10" y="38" width="1" height="1" fill="#3dc9b0" fill-opacity="0.28"/><rect x="10" y="39" width="1" height="1" fill="#3dc9b0" fill-opacity="0.55"/><rect x="11" y="38" width="1" height="1" fill="#3dc9b0" fill-opacity="0.12"/><rect x="11" y="39" width="1" height="1" fill="#3dc9b0" fill-opacity="0.25"/><rect x="12" y="38" width="1" height="1" fill="#3dc9b0" fill-opacity="0.28"/><rect x="12" y="39" width="1" height="1" fill="#3dc9b0" fill-opacity="0.55"/><rect x="13" y="38" width="1" height="1" fill="#3dc9b0" fill-opacity="0.28"/><rect x="13" y="39" width="1" height="1" fill="#3dc9b0" fill-opacity="0.55"/><rect x="14" y="38" width="1" height="1" fill="#3dc9b0" fill-opacity="0.38"/><rect x="14" y="39" width="1" height="1" fill="#3dc9b0" fill-opacity="0.75"/><rect x="15" y="38" width="1" height="1" fill="#3dc9b0" fill-opacity="0.12"/><rect x="15" y="39" width="1" height="1" fill="#3dc9b0" fill-opacity="0.25"/><rect x="16" y="38" width="1" height="1" fill="#3dc9b0" fill-opacity="0.38"/><rect x="16" y="39" width="1" height="1" fill="#3dc9b0" fill-opacity="0.75"/><rect x="17" y="38" width="1" height="1" fill="#3dc9b0" fill-opacity="0.28"/><rect x="17" y="39" width="1" height="1" fill="#3dc9b0" fill-opacity="0.55"/><rect x="18" y="38" width="1" height="1" fill="#3dc9b0" fill-opacity="0.38"/><rect x="18" y="39" width="1" height="1" fill="#3dc9b0" fill-opacity="0.75"/><rect x="19" y="38" width="1" height="1" fill="#3dc9b0" fill-opacity="0.28"/><rect x="19" y="39" width="1" height="1" fill="#3dc9b0" fill-opacity="0.55"/><rect x="20" y="38" width="1" height="1" fill="#3dc9b0" fill-opacity="0.38"/><rect x="20" y="39" width="1" height="1" fill="#3dc9b0" fill-opacity="0.75"/><rect x="21" y="38" width="1" height="1" fill="#3dc9b0" fill-opacity="0.28"/><rect x="21" y="39" width="1" height="1" fill="#3dc9b0" fill-opacity="0.55"/><rect x="22" y="38" width="1" height="1" fill="#3dc9b0" fill-opacity="0.12"/><rect x="22" y="39" width="1" height="1" fill="#3dc9b0" fill-opacity="0.25"/><rect x="23" y="38" width="1" height="1" fill="#3dc9b0" fill-opacity="0.28"/><rect x="23" y="39" width="1" height="1" fill="#3dc9b0" fill-opacity="0.55"/><rect x="24" y="38" width="1" height="1" fill="#3dc9b0" fill-opacity="0.28"/><rect x="24" y="39" width="1" height="1" fill="#3dc9b0" fill-opacity="0.55"/><rect x="25" y="38" width="1" height="1" fill="#3dc9b0" fill-opacity="0.38"/><rect x="25" y="39" width="1" height="1" fill="#3dc9b0" fill-opacity="0.75"/><rect x="26" y="38" width="1" height="1" fill="#3dc9b0" fill-opacity="0.28"/><rect x="26" y="39" width="1" height="1" fill="#3dc9b0" fill-opacity="0.55"/><rect x="27" y="38" width="1" height="1" fill="#3dc9b0" fill-opacity="0.28"/><rect x="27" y="39" width="1" height="1" fill="#3dc9b0" fill-opacity="0.55"/><rect x="28" y="38" width="1" height="1" fill="#d4d4d4" fill-opacity="0.12"/><rect x="28" y="39" width="1" height="1" fill="#d4d4d4" fill-opacity="0.25"/><rect x="30" y="38" width="1" height="1" fill="#b5cea8" fill-opacity="0.38"/><rect x="30" y="39" width="1" height="1" fill="#b5cea8" fill-opacity="0.75"/><rect x="2" y="40" width="1" height="1" fill="#3dc9b0" fill-opacity="0.28"/><rect x="2" y="41" width="1" height="1" fill="#3dc9b0" fill-opacity="0.55"/><rect x="3" y="40" width="1" height="1" fill="#3dc9b0" fill-opacity="0.28"/><rect x="3" y="41" width="1" height="1" fill="#3dc9b0" fill-opacity="0.55"/><rect x="4" y="40" width="1" height="1" fill="#3dc9b0" fill-opacity="0.28"/><rect x="4" y="41" width="1" height="1" fill="#3dc9b0" fill-opacity="0.55"/><rect x="5" y="40" width="1" height="1" fill="#3dc9b0" fill-opacity="0.38"/><rect x="5" y="41" width="1" height="1" fill="#3dc9b0" fill-opacity="0.75"/><rect x="6" y="40" width="1" height="1" fill="#3dc9b0" fill-opacity="0.28"/><rect x="6" y="41" width="1" height="1" fill="#3dc9b0" fill-opacity="0.55"/><rect x="7" y="40" width="1" height="1" fill="#3dc9b0" fill-opacity="0.28"/><rect x="7" y="41" width="1" height="1" fill="#3dc9b0" fill-opacity="0.55"/><rect x="8" y="40" width="1" height="1" fill="#3dc9b0" fill-opacity="0.28"/><rect x="8" y="41" width="1" height="1" fill="#3dc9b0" fill-opacity="0.55"/><rect x="9" y="40" width="1" height="1" fill="#3dc9b0" fill-opacity="0.28"/><rect x="9" y="41" width="1" height="1" fill="#3dc9b0" fill-opacity="0.55"/><rect x="10" y="40" width="1" height="1" fill="#3dc9b0" fill-opacity="0.28"/><rect x="10" y="41" width="1" height="1" fill="#3dc9b0" fill-opacity="0.55"/><rect x="11" y="40" width="1" height="1" fill="#3dc9b0" fill-opacity="0.38"/><rect x="11" y="41" width="1" height="1" fill="#3dc9b0" fill-opacity="0.75"/><rect x="12" y="40" width="1" height="1" fill="#3dc9b0" fill-opacity="0.28"/><rect x="12" y="41" width="1" height="1" fill="#3dc9b0" fill-opacity="0.55"/><rect x="13" y="40" width="1" height="1" fill="#3dc9b0" fill-opacity="0.28"/><rect x="13" y="41" width="1" height="1" fill="#3dc9b0" fill-opacity="0.55"/><rect x="14" y="40" width="1" height="1" fill="#3dc9b0" fill-opacity="0.28"/><rect x="14" y="41" width="1" height="1" fill="#3dc9b0" fill-opacity="0.55"/><rect x="15" y="40" width="1" height="1" fill="#d4d4d4" fill-opacity="0.12"/><rect x="15" y="41" width="1" height="1" fill="#d4d4d4" fill-opacity="0.25"/><rect x="4" y="42" width="1" height="1" fill="#3dc9b0" fill-opacity="0.28"/><rect x="4" y="43" width="1" height="1" fill="#3dc9b0" fill-opacity="0.55"/><rect x="5" y="42" width="1" height="1" fill="#3dc9b0" fill-opacity="0.28"/><rect x="5" y="43" width="1" height="1" fill="#3dc9b0" fill-opacity="0.55"/><rect x="6" y="42" width="1" height="1" fill="#3dc9b0" fill-opacity="0.28"/><rect x="6" y="43" width="1" height="1" fill="#3dc9b0" fill-opacity="0.55"/><rect x="7" y="42" width="1" height="1" fill="#3dc9b0" fill-opacity="0.12"/><rect x="7" y="43" width="1" height="1" fill="#3dc9b0" fill-opacity="0.25"/><rect x="8" y="42" width="1" height="1" fill="#3dc9b0" fill-opacity="0.28"/><rect x="8" y="43" width="1" height="1" fill="#3dc9b0" fill-opacity="0.55"/><rect x="9" y="42" width="1" height="1" fill="#3dc9b0" fill-opacity="0.28"/><rect x="9" y="43" width="1" height="1" fill="#3dc9b0" fill-opacity="0.55"/><rect x="10" y="42" width="1" height="1" fill="#3dc9b0" fill-opacity="0.38"/><rect x="10" y="43" width="1" height="1" fill="#3dc9b0" fill-opacity="0.75"/><rect x="11" y="42" width="1" height="1" fill="#3dc9b0" fill-opacity="0.28"/><rect x="11" y="43" width="1" height="1" fill="#3dc9b0" fill-opacity="0.55"/><rect x="12" y="42" width="1" height="1" fill="#3dc9b0" fill-opacity="0.28"/><rect x="12" y="43" width="1" height="1" fill="#3dc9b0" fill-opacity="0.55"/><rect x="13" y="42" width="1" height="1" fill="#3dc9b0" fill-opacity="0.28"/><rect x="13" y="43" width="1" height="1" fill="#3dc9b0" fill-opacity="0.55"/><rect x="14" y="42" width="1" height="1" fill="#3dc9b0" fill-opacity="0.28"/><rect x="14" y="43" width="1" height="1" fill="#3dc9b0" fill-opacity="0.55"/><rect x="15" y="42" width="1" height="1" fill="#3dc9b0" fill-opacity="0.28"/><rect x="15" y="43" width="1" height="1" fill="#3dc9b0" fill-opacity="0.55"/><rect x="16" y="42" width="1" height="1" fill="#3dc9b0" fill-opacity="0.28"/><rect x="16" y="43" width="1" height="1" fill="#3dc9b0" fill-opacity="0.55"/><rect x="17" y="42" width="1" height="1" fill="#3dc9b0" fill-opacity="0.28"/><rect x="17" y="43" width="1" height="1" fill="#3dc9b0" fill-opacity="0.55"/><rect x="18" y="42" width="1" height="1" fill="#3dc9b0" fill-opacity="0.12"/><rect x="18" y="43" width="1" height="1" fill="#3dc9b0" fill-opacity="0.25"/><rect x="19" y="42" width="1" height="1" fill="#3dc9b0" fill-opacity="0.38"/><rect x="19" y="43" width="1" height="1" fill="#3dc9b0" fill-opacity="0.75"/><rect x="20" y="42" width="1" height="1" fill="#3dc9b0" fill-opacity="0.28"/><rect x="20" y="43" width="1" height="1" fill="#3dc9b0" fill-opacity="0.55"/><rect x="21" y="42" width="1" height="1" fill="#3dc9b0" fill-opacity="0.12"/><rect x="21" y="43" width="1" height="1" fill="#3dc9b0" fill-opacity="0.25"/><rect x="22" y="42" width="1" height="1" fill="#3dc9b0" fill-opacity="0.28"/><rect x="22" y="43" width="1" height="1" fill="#3dc9b0" fill-opacity="0.55"/><rect x="23" y="42" width="1" height="1" fill="#3dc9b0" fill-opacity="0.28"/><rect x="23" y="43" width="1" height="1" fill="#3dc9b0" fill-opacity="0.55"/><rect x="24" y="42" width="1" height="1" fill="#3dc9b0" fill-opacity="0.28"/><rect x="24" y="43" width="1" height="1" fill="#3dc9b0" fill-opacity="0.55"/><rect x="25" y="42" width="1" height="1" fill="#3dc9b0" fill-opacity="0.28"/><rect x="25" y="43" width="1" height="1" fill="#3dc9b0" fill-opacity="0.55"/><rect x="26" y="42" width="1" height="1" fill="#3dc9b0" fill-opacity="0.38"/><rect x="26" y="43" width="1" height="1" fill="#3dc9b0" fill-opacity="0.75"/><rect x="27" y="42" width="1" height="1" fill="#3dc9b0" fill-opacity="0.12"/><rect x="27" y="43" width="1" height="1" fill="#3dc9b0" fill-opacity="0.25"/><rect x="28" y="42" width="1" height="1" fill="#3dc9b0" fill-opacity="0.28"/><rect x="28" y="43" width="1" height="1" fill="#3dc9b0" fill-opacity="0.55"/><rect x="29" y="42" width="1" height="1" fill="#3dc9b0" fill-opacity="0.28"/><rect x="29" y="43" width="1" height="1" fill="#3dc9b0" fill-opacity="0.55"/><rect x="30" y="42" width="1" height="1" fill="#3dc9b0" fill-opacity="0.28"/><rect x="30" y="43" width="1" height="1" fill="#3dc9b0" fill-opacity="0.55"/><rect x="31" y="42" width="1" height="1" fill="#3dc9b0" fill-opacity="0.28"/><rect x="31" y="43" width="1" height="1" fill="#3dc9b0" fill-opacity="0.55"/><rect x="32" y="42" width="1" height="1" fill="#d4d4d4" fill-opacity="0.12"/><rect x="32" y="43" width="1" height="1" fill="#d4d4d4" fill-opacity="0.25"/><rect x="34" y="42" width="1" height="1" fill="#ce9178" fill-opacity="0.28"/><rect x="34" y="43" width="1" height="1" fill="#ce9178" fill-opacity="0.55"/><rect x="35" y="42" width="1" height="1" fill="#ce9178" fill-opacity="0.28"/><rect x="35" y="43" width="1" height="1" fill="#ce9178" fill-opacity="0.55"/><rect x="4" y="44" width="1" height="1" fill="#3dc9b0" fill-opacity="0.28"/><rect x="4" y="45" width="1" height="1" fill="#3dc9b0" fill-opacity="0.55"/><rect x="5" y="44" width="1" height="1" fill="#3dc9b0" fill-opacity="0.28"/><rect x="5" y="45" width="1" height="1" fill="#3dc9b0" fill-opacity="0.55"/><rect x="6" y="44" width="1" height="1" fill="#3dc9b0" fill-opacity="0.38"/><rect x="6" y="45" width="1" height="1" fill="#3dc9b0" fill-opacity="0.75"/><rect x="7" y="44" width="1" height="1" fill="#3dc9b0" fill-opacity="0.38"/><rect x="7" y="45" width="1" height="1" fill="#3dc9b0" fill-opacity="0.75"/><rect x="8" y="44" width="1" height="1" fill="#3dc9b0" fill-opacity="0.12"/><rect x="8" y="45" width="1" height="1" fill="#3dc9b0" fill-opacity="0.25"/><rect x="9" y="44" width="1" height="1" fill="#3dc9b0" fill-opacity="0.28"/><rect x="9" y="45" width="1" height="1" fill="#3dc9b0" fill-opacity="0.55"/><rect x="10" y="44" width="1" height="1" fill="#3dc9b0" fill-opacity="0.28"/><rect x="10" y="45" width="1" height="1" fill="#3dc9b0" fill-opacity="0.55"/><rect x="11" y="44" width="1" height="1" fill="#3dc9b0" fill-opacity="0.38"/><rect x="11" y="45" width="1" height="1" fill="#3dc9b0" fill-opacity="0.75"/><rect x="12" y="44" width="1" height="1" fill="#3dc9b0" fill-opacity="0.38"/><rect x="12" y="45" width="1" height="1" fill="#3dc9b0" fill-opacity="0.75"/><rect x="13" y="44" width="1" height="1" fill="#3dc9b0" fill-opacity="0.28"/><rect x="13" y="45" width="1" height="1" fill="#3dc9b0" fill-opacity="0.55"/><rect x="14" y="44" width="1" height="1" fill="#3dc9b0" fill-opacity="0.28"/><rect x="14" y="45" width="1" height="1" fill="#3dc9b0" fill-opacity="0.55"/><rect x="15" y="44" width="1" height="1" fill="#3dc9b0" fill-opacity="0.28"/><rect x="15" y="45" width="1" height="1" fill="#3dc9b0" fill-opacity="0.55"/><rect x="16" y="44" width="1" height="1" fill="#3dc9b0" fill-opacity="0.12"/><rect x="16" y="45" width="1" height="1" fill="#3dc9b0" fill-opacity="0.25"/><rect x="17" y="44" width="1" height="1" fill="#3dc9b0" fill-opacity="0.28"/><rect x="17" y="45" width="1" height="1" fill="#3dc9b0" fill-opacity="0.55"/><rect x="18" y="44" width="1" height="1" fill="#3dc9b0" fill-opacity="0.28"/><rect x="18" y="45" width="1" height="1" fill="#3dc9b0" fill-opacity="0.55"/><rect x="19" y="44" width="1" height="1" fill="#3dc9b0" fill-opacity="0.12"/><rect x="19" y="45" width="1" height="1" fill="#3dc9b0" fill-opacity="0.25"/><rect x="20" y="44" width="1" height="1" fill="#3dc9b0" fill-opacity="0.28"/><rect x="20" y="45" width="1" height="1" fill="#3dc9b0" fill-opacity="0.55"/><rect x="21" y="44" width="1" height="1" fill="#3dc9b0" fill-opacity="0.28"/><rect x="21" y="45" width="1" height="1" fill="#3dc9b0" fill-opacity="0.55"/><rect x="22" y="44" width="1" height="1" fill="#3dc9b0" fill-opacity="0.38"/><rect x="22" y="45" width="1" height="1" fill="#3dc9b0" fill-opacity="0.75"/><rect x="23" y="44" width="1" height="1" fill="#3dc9b0" fill-opacity="0.38"/><rect x="23" y="45" width="1" height="1" fill="#3dc9b0" fill-opacity="0.75"/><rect x="24" y="44" width="1" height="1" fill="#3dc9b0" fill-opacity="0.28"/><rect x="24" y="45" width="1" height="1" fill="#3dc9b0" fill-opacity="0.55"/><rect x="25" y="44" width="1" height="1" fill="#d4d4d4" fill-opacity="0.12"/><rect x="25" y="45" width="1" height="1" fill="#d4d4d4" fill-opacity="0.25"/><rect x="27" y="44" width="1" height="1" fill="#ce9178" fill-opacity="0.28"/><rect x="27" y="45" width="1" height="1" fill="#ce9178" fill-opacity="0.55"/><rect x="28" y="44" width="1" height="1" fill="#ce9178" fill-opacity="0.28"/><rect x="28" y="45" width="1" height="1" fill="#ce9178" fill-opacity="0.55"/><rect x="4" y="46" width="1" height="1" fill="#3dc9b0" fill-opacity="0.38"/><rect x="4" y="47" width="1" height="1" fill="#3dc9b0" fill-opacity="0.75"/><rect x="5" y="46" width="1" height="1" fill="#3dc9b0" fill-opacity="0.28"/><rect x="5" y="47" width="1" height="1" fill="#3dc9b0" fill-opacity="0.55"/><rect x="6" y="46" width="1" height="1" fill="#3dc9b0" fill-opacity="0.28"/><rect x="6" y="47" width="1" height="1" fill="#3dc9b0" fill-opacity="0.55"/><rect x="7" y="46" width="1" height="1" fill="#3dc9b0" fill-opacity="0.12"/><rect x="7" y="47" width="1" height="1" fill="#3dc9b0" fill-opacity="0.25"/><rect x="8" y="46" width="1" height="1" fill="#3dc9b0" fill-opacity="0.28"/><rect x="8" y="47" width="1" height="1" fill="#3dc9b0" fill-opacity="0.55"/><rect x="9" y="46" width="1" height="1" fill="#3dc9b0" fill-opacity="0.28"/><rect x="9" y="47" width="1" height="1" fill="#3dc9b0" fill-opacity="0.55"/><rect x="10" y="46" width="1" height="1" fill="#3dc9b0" fill-opacity="0.28"/><rect x="10" y="47" width="1" height="1" fill="#3dc9b0" fill-opacity="0.55"/><rect x="11" y="46" width="1" height="1" fill="#3dc9b0" fill-opacity="0.38"/><rect x="11" y="47" width="1" height="1" fill="#3dc9b0" fill-opacity="0.75"/><rect x="12" y="46" width="1" height="1" fill="#d4d4d4" fill-opacity="0.12"/><rect x="12" y="47" width="1" height="1" fill="#d4d4d4" fill-opacity="0.25"/><rect x="14" y="46" width="1" height="1" fill="#ce9178" fill-opacity="0.28"/><rect x="14" y="47" width="1" height="1" fill="#ce9178" fill-opacity="0.55"/><rect x="15" y="46" width="1" height="1" fill="#ce9178" fill-opacity="0.28"/><rect x="15" y="47" width="1" height="1" fill="#ce9178" fill-opacity="0.55"/><rect x="16" y="46" width="1" height="1" fill="#ce9178" fill-opacity="0.28"/><rect x="16" y="47" width="1" height="1" fill="#ce9178" fill-opacity="0.55"/><rect x="17" y="46" width="1" height="1" fill="#ce9178" fill-opacity="0.12"/><rect x="17" y="47" width="1" height="1" fill="#ce9178" fill-opacity="0.25"/><rect x="18" y="46" width="1" height="1" fill="#ce9178" fill-opacity="0.28"/><rect x="18" y="47" width="1" height="1" fill="#ce9178" fill-opacity="0.55"/><rect x="19" y="46" width="1" height="1" fill="#ce9178" fill-opacity="0.28"/><rect x="19" y="47" width="1" height="1" fill="#ce9178" fill-opacity="0.55"/><rect x="20" y="46" width="1" height="1" fill="#ce9178" fill-opacity="0.28"/><rect x="20" y="47" width="1" height="1" fill="#ce9178" fill-opacity="0.55"/><rect x="21" y="46" width="1" height="1" fill="#ce9178" fill-opacity="0.28"/><rect x="21" y="47" width="1" height="1" fill="#ce9178" fill-opacity="0.55"/><rect x="22" y="46" width="1" height="1" fill="#ce9178" fill-opacity="0.38"/><rect x="22" y="47" width="1" height="1" fill="#ce9178" fill-opacity="0.75"/><rect x="23" y="46" width="1" height="1" fill="#ce9178" fill-opacity="0.28"/><rect x="23" y="47" width="1" height="1" fill="#ce9178" fill-opacity="0.55"/><rect x="24" y="46" width="1" height="1" fill="#ce9178" fill-opacity="0.12"/><rect x="24" y="47" width="1" height="1" fill="#ce9178" fill-opacity="0.25"/><rect x="25" y="46" width="1" height="1" fill="#ce9178" fill-opacity="0.28"/><rect x="25" y="47" width="1" height="1" fill="#ce9178" fill-opacity="0.55"/><rect x="26" y="46" width="1" height="1" fill="#ce9178" fill-opacity="0.38"/><rect x="26" y="47" width="1" height="1" fill="#ce9178" fill-opacity="0.75"/><rect x="27" y="46" width="1" height="1" fill="#ce9178" fill-opacity="0.28"/><rect x="27" y="47" width="1" height="1" fill="#ce9178" fill-opacity="0.55"/><rect x="28" y="46" width="1" height="1" fill="#ce9178" fill-opacity="0.38"/><rect x="28" y="47" width="1" height="1" fill="#ce9178" fill-opacity="0.75"/><rect x="29" y="46" width="1" height="1" fill="#ce9178" fill-opacity="0.28"/><rect x="29" y="47" width="1" height="1" fill="#ce9178" fill-opacity="0.55"/><rect x="30" y="46" width="1" height="1" fill="#ce9178" fill-opacity="0.28"/><rect x="30" y="47" width="1" height="1" fill="#ce9178" fill-opacity="0.55"/><rect x="31" y="46" width="1" height="1" fill="#ce9178" fill-opacity="0.12"/><rect x="31" y="47" width="1" height="1" fill="#ce9178" fill-opacity="0.25"/><rect x="32" y="46" width="1" height="1" fill="#ce9178" fill-opacity="0.38"/><rect x="32" y="47" width="1" height="1" fill="#ce9178" fill-opacity="0.75"/><rect x="33" y="46" width="1" height="1" fill="#ce9178" fill-opacity="0.28"/><rect x="33" y="47" width="1" height="1" fill="#ce9178" fill-opacity="0.55"/><rect x="34" y="46" width="1" height="1" fill="#ce9178" fill-opacity="0.28"/><rect x="34" y="47" width="1" height="1" fill="#ce9178" fill-opacity="0.55"/><rect x="35" y="46" width="1" height="1" fill="#ce9178" fill-opacity="0.28"/><rect x="35" y="47" width="1" height="1" fill="#ce9178" fill-opacity="0.55"/><rect x="36" y="46" width="1" height="1" fill="#ce9178" fill-opacity="0.28"/><rect x="36" y="47" width="1" height="1" fill="#ce9178" fill-opacity="0.55"/><rect x="37" y="46" width="1" height="1" fill="#ce9178" fill-opacity="0.28"/><rect x="37" y="47" width="1" height="1" fill="#ce9178" fill-opacity="0.55"/><rect x="38" y="46" width="1" height="1" fill="#ce9178" fill-opacity="0.28"/><rect x="38" y="47" width="1" height="1" fill="#ce9178" fill-opacity="0.55"/><rect x="39" y="46" width="1" height="1" fill="#ce9178" fill-opacity="0.12"/><rect x="39" y="47" width="1" height="1" fill="#ce9178" fill-opacity="0.25"/><rect x="40" y="46" width="1" height="1" fill="#ce9178" fill-opacity="0.28"/><rect x="40" y="47" width="1" height="1" fill="#ce9178" fill-opacity="0.55"/><rect x="41" y="46" width="1" height="1" fill="#ce9178" fill-opacity="0.38"/><rect x="41" y="47" width="1" height="1" fill="#ce9178" fill-opacity="0.75"/><rect x="42" y="46" width="1" height="1" fill="#ce9178" fill-opacity="0.38"/><rect x="42" y="47" width="1" height="1" fill="#ce9178" fill-opacity="0.75"/><rect x="43" y="46" width="1" height="1" fill="#ce9178" fill-opacity="0.28"/><rect x="43" y="47" width="1" height="1" fill="#ce9178" fill-opacity="0.55"/><rect x="44" y="46" width="1" height="1" fill="#ce9178" fill-opacity="0.28"/><rect x="44" y="47" width="1" height="1" fill="#ce9178" fill-opacity="0.55"/><rect x="45" y="46" width="1" height="1" fill="#ce9178" fill-opacity="0.38"/><rect x="45" y="47" width="1" height="1" fill="#ce9178" fill-opacity="0.75"/><rect x="46" y="46" width="1" height="1" fill="#ce9178" fill-opacity="0.12"/><rect x="46" y="47" width="1" height="1" fill="#ce9178" fill-opacity="0.25"/><rect x="47" y="46" width="1" height="1" fill="#ce9178" fill-opacity="0.38"/><rect x="47" y="47" width="1" height="1" fill="#ce9178" fill-opacity="0.75"/><rect x="48" y="46" width="1" height="1" fill="#ce9178" fill-opacity="0.38"/><rect x="48" y="47" width="1" height="1" fill="#ce9178" fill-opacity="0.75"/><rect x="49" y="46" width="1" height="1" fill="#ce9178" fill-opacity="0.38"/><rect x="49" y="47" width="1" height="1" fill="#ce9178" fill-opacity="0.75"/><rect x="50" y="46" width="1" height="1" fill="#ce9178" fill-opacity="0.38"/><rect x="50" y="47" width="1" height="1" fill="#ce9178" fill-opacity="0.75"/><rect x="51" y="46" width="1" height="1" fill="#ce9178" fill-opacity="0.28"/><rect x="51" y="47" width="1" height="1" fill="#ce9178" fill-opacity="0.55"/><rect x="52" y="46" width="1" height="1" fill="#ce9178" fill-opacity="0.38"/><rect x="52" y="47" width="1" height="1" fill="#ce9178" fill-opacity="0.75"/><rect x="53" y="46" width="1" height="1" fill="#ce9178" fill-opacity="0.38"/><rect x="53" y="47" width="1" height="1" fill="#ce9178" fill-opacity="0.75"/><rect x="54" y="46" width="1" height="1" fill="#ce9178" fill-opacity="0.28"/><rect x="54" y="47" width="1" height="1" fill="#ce9178" fill-opacity="0.55"/><rect x="55" y="46" width="1" height="1" fill="#ce9178" fill-opacity="0.28"/><rect x="55" y="47" width="1" height="1" fill="#ce9178" fill-opacity="0.55"/><rect x="56" y="46" width="1" height="1" fill="#ce9178" fill-opacity="0.38"/><rect x="56" y="47" width="1" height="1" fill="#ce9178" fill-opacity="0.75"/></svg>
<div class="abs" style="left:1529px;top:0;width:1px;height:450px;background:#4a4a4a"></div>
<div class="abs" style="left:1530px;top:48px;width:13px;height:2px;background:#a0a0a0"></div>
</div>

<div class="abs" style="left:1903px;top:68px;width:13px;height:843px;background:#f1f1f1"></div>
<div class="abs" style="left:1905px;top:154px;width:11px;height:750px;background:#c1c1c1"></div>
<svg class="abs" style="left:1903px;top:68px" width="13" height="14"><path d="M5 10 L8.5 6 L12 10 Z" fill="#505050"/></svg>
<div class="abs" style="left:1908px;top:910px;width:7px;height:1px;background:#707070"></div>
<div class="btn" style="left:1761px;background:#5584ff;color:#fff">发布</div>
<div class="btn" style="left:1829px;border:1px solid #c4c6cf;background:#fff;color:#333">返回</div>

<div class="redbox" style="left:259px;top:93px;width:277px;height:42px"></div>
<div class="redbox" style="left:255px;top:144px;width:224px;height:37px"></div>
<div class="redbox" style="left:523px;top:354px;width:84px;height:42px"></div>
<div class="redbox" style="left:1730px;top:857px;width:95px;height:51px"></div>
</body></html>
